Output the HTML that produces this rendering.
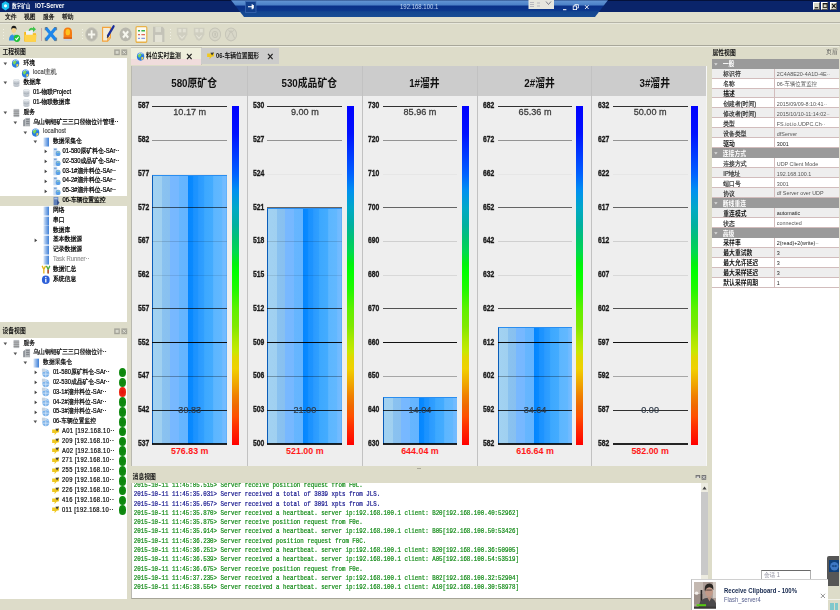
<!DOCTYPE html>
<html lang="zh"><head><meta charset="utf-8"><title>IOT-Server</title>
<style>
html,body{margin:0;padding:0;}
body{width:840px;height:610px;overflow:hidden;position:relative;background:#dddcc9;font-family:"Liberation Sans","WenQuanYi Zen Hei","Noto Sans CJK SC",sans-serif;}
div{position:absolute;box-sizing:border-box;}
.t{white-space:nowrap;transform:scaleY(1.15);}
.m{white-space:nowrap;transform:scaleY(1.15);font-family:"Liberation Mono","WenQuanYi Zen Hei Mono",monospace;}
svg{position:absolute;overflow:visible;}
.ti{transform:scale(1.08,1.2);}
</style></head><body>

<div style="left:0px;top:11.5px;width:840px;height:10.5px;background:#e0dfcd;"></div>
<div style="left:0px;top:0px;width:840px;height:11.5px;background:#0a246a;"></div>
<div style="left:0px;top:0px;width:840px;height:1px;background:#04113a;"></div>
<svg style="left:1px;top:1px" width="9" height="10" viewBox="0 0 9 10"><path d="M4.5 0.3 L8.2 2.4 L8.2 7 L4.5 9.4 L0.8 7 L0.8 2.4 Z" fill="#19c3f0"/><circle cx="4.5" cy="4.8" r="1.6" fill="#e8fbff"/></svg>
<div class="t" style="left:12px;top:4.01px;font-size:4.6px;line-height:5.98px;color:#fff;font-weight:bold;font-family:'Liberation Sans','Noto Sans CJK SC',sans-serif;">数字矿山</div>
<div class="t" style="left:35px;top:3.23px;font-size:5.8px;line-height:7.54px;color:#fff;font-weight:bold;font-family:'Liberation Sans','Noto Sans CJK SC',sans-serif;">IOT-Server</div>
<div style="left:813.3px;top:1.6px;width:7.2px;height:8px;background:#d8d7c6;border-top:0.6px solid #fff;border-left:0.6px solid #fff;border-right:0.8px solid #555;border-bottom:0.8px solid #555;"></div>
<div style="left:821.3px;top:1.6px;width:7.2px;height:8px;background:#d8d7c6;border-top:0.6px solid #fff;border-left:0.6px solid #fff;border-right:0.8px solid #555;border-bottom:0.8px solid #555;"></div>
<div style="left:830px;top:1.6px;width:7.2px;height:8px;background:#d8d7c6;border-top:0.6px solid #fff;border-left:0.6px solid #fff;border-right:0.8px solid #555;border-bottom:0.8px solid #555;"></div>
<svg style="left:813px;top:1px" width="26" height="10" viewBox="0 0 26 10"><rect x="1.8" y="6.2" width="3.4" height="1.1" fill="#111"/><rect x="10.2" y="2.4" width="3.8" height="4" fill="none" stroke="#111" stroke-width="0.8"/><rect x="10.2" y="2.2" width="3.8" height="1.2" fill="#111"/><path d="M19 2.8 L22.6 6.8 M22.6 2.8 L19 6.8" stroke="#111" stroke-width="1.1"/></svg>
<svg style="left:228px;top:0" width="384" height="18" viewBox="0 0 384 18">
<defs><linearGradient id="rdp" x1="0" y1="0" x2="0" y2="1">
<stop offset="0" stop-color="#2c4c84"/><stop offset="0.07" stop-color="#6092d2"/><stop offset="0.3" stop-color="#4a80c6"/><stop offset="0.35" stop-color="#0a3088"/><stop offset="0.62" stop-color="#0c388c"/><stop offset="0.7" stop-color="#144690"/><stop offset="1" stop-color="#184c94"/></linearGradient></defs>
<path d="M3 0 L380 0 L367 17 L16 17 Z" fill="url(#rdp)"/>
<rect x="17.5" y="1.6" width="10.5" height="10.8" fill="#123f8c" stroke="#3f6cb4" stroke-width="0.7"/>
<path d="M20 6.8 H24.2 M24.2 4.3 V9.3 M25.3 5 V8.6" stroke="#fff" stroke-width="1.1" fill="none"/>
<rect x="300.5" y="0" width="25.5" height="9" fill="#e6e6de"/>
<path d="M302 2.5 h4 M302 4.5 h4 M302 6.5 h4 M309 3 h3 M309 6 h3" stroke="#99a" stroke-width="0.6"/>
<path d="M318 1.5 l2.5 3 l2.5 -3" stroke="#667" stroke-width="0.8" fill="none"/>
<rect x="335" y="9.2" width="3.4" height="1" fill="#fff"/>
<rect x="345.2" y="6" width="3.4" height="3.6" fill="none" stroke="#fff" stroke-width="0.8"/>
<path d="M346.8 6 V4.6 H350.4 V8 H348.8" fill="none" stroke="#fff" stroke-width="0.8"/>
<path d="M357 5.2 L360.6 9 M360.6 5.2 L357 9" stroke="#fff" stroke-width="0.9"/>
</svg>
<div class="t" style="left:400px;top:4.4px;font-size:6.0px;line-height:7.8px;color:#bcd2f0;">192.168.100.1</div>
<div class="t" style="left:5px;top:14.23px;font-size:5.8px;line-height:7.54px;color:#111;-webkit-text-stroke:0.2px #111;">文件</div>
<div class="t" style="left:24px;top:14.23px;font-size:5.8px;line-height:7.54px;color:#111;-webkit-text-stroke:0.2px #111;">视图</div>
<div class="t" style="left:43px;top:14.23px;font-size:5.8px;line-height:7.54px;color:#111;-webkit-text-stroke:0.2px #111;">服务</div>
<div class="t" style="left:62px;top:14.23px;font-size:5.8px;line-height:7.54px;color:#111;-webkit-text-stroke:0.2px #111;">帮助</div>
<div style="left:0px;top:21.9px;width:840px;height:0.9px;background:#b6b5a8;"></div>
<div style="left:0px;top:22.8px;width:840px;height:0.8px;background:#e8e8dc;"></div>
<div style="left:0px;top:44.6px;width:840px;height:0.9px;background:#a8a79a;"></div>
<div style="left:0px;top:45.5px;width:840px;height:0.6px;background:#eeeee2;"></div>
<div style="left:3.2px;top:29px;width:1.2px;height:1.2px;background:#f0f0e4;"></div>
<div style="left:3.2px;top:32px;width:1.2px;height:1.2px;background:#f0f0e4;"></div>
<div style="left:3.2px;top:35px;width:1.2px;height:1.2px;background:#f0f0e4;"></div>
<div style="left:3.2px;top:38px;width:1.2px;height:1.2px;background:#f0f0e4;"></div>
<div style="left:81.5px;top:29px;width:1.2px;height:1.2px;background:#f0f0e4;"></div>
<div style="left:81.5px;top:32px;width:1.2px;height:1.2px;background:#f0f0e4;"></div>
<div style="left:81.5px;top:35px;width:1.2px;height:1.2px;background:#f0f0e4;"></div>
<div style="left:81.5px;top:38px;width:1.2px;height:1.2px;background:#f0f0e4;"></div>
<div style="left:170px;top:29px;width:1.2px;height:1.2px;background:#f0f0e4;"></div>
<div style="left:170px;top:32px;width:1.2px;height:1.2px;background:#f0f0e4;"></div>
<div style="left:170px;top:35px;width:1.2px;height:1.2px;background:#f0f0e4;"></div>
<div style="left:170px;top:38px;width:1.2px;height:1.2px;background:#f0f0e4;"></div>
<svg style="left:8px;top:25px" width="14" height="18.4" preserveAspectRatio="none" viewBox="0 0 14 16">
<circle cx="5.8" cy="4.6" r="2.3" fill="#f3d28c"/><path d="M3.2 4.4 Q3 0.6 5.8 0.6 Q8.8 0.6 8.5 4.4 L7.8 3 Q5.8 2.2 3.9 3 Z" fill="#1a1a1a"/>
<path d="M1 13.4 Q1 8 5.6 8 Q9.6 8 10 13.4 Z" fill="#2f8fe6"/>
<path d="M5.8 7.2 L4.6 9 L7 9 Z" fill="#f3e2a0"/>
<circle cx="9" cy="11.6" r="3.2" fill="#22c23a"/><path d="M7.4 11.6 L8.6 12.8 L10.6 10.4" stroke="#fff" stroke-width="1" fill="none"/></svg>
<svg style="left:23px;top:25px" width="15" height="18.4" preserveAspectRatio="none" viewBox="0 0 15 16">
<path d="M1.2 6 L5 6 L6 7.2 L13 7.2 L13 14.4 L1.2 14.4 Z" fill="#f7b818"/>
<path d="M3 5 L9.8 5 L9.8 9 L3 9 Z" fill="#eef3f8"/>
<path d="M1.4 8.4 L13.6 8.4 L12.8 14.6 L2 14.6 Z" fill="#ffd34a"/>
<path d="M5.5 4.6 Q7.5 1.6 10 2.8 L10 1.2 L13 3.6 L10 6 L10 4.4 Q8 3.8 6.6 5.2 Z" fill="#3fc34a"/></svg>
<div style="left:40.8px;top:28px;width:0.8px;height:12.5px;background:#c9a9a9;"></div>
<svg style="left:44px;top:25px" width="14" height="18.4" preserveAspectRatio="none" viewBox="0 0 14 16">
<path d="M2.6 3.4 L11 12.2 M11 3.4 L2.6 12.2" stroke="#1d86ea" stroke-width="3" stroke-linecap="round"/>
<path d="M1.2 4.6 V2.2 H3.4 M10.4 2.2 H12.6 V4.6 M12.6 11 V13.6 H10.4 M3.4 13.6 H1.2 V11" stroke="#5a6a78" stroke-width="0.7" fill="none"/></svg>
<svg style="left:62px;top:25px" width="12" height="18.4" preserveAspectRatio="none" viewBox="0 0 12 16">
<ellipse cx="5.8" cy="12.6" rx="4.6" ry="1.4" fill="#cfd6dc"/>
<path d="M1.6 11.8 V6.6 Q1.6 2.2 5.8 2.2 Q10 2.2 10 6.6 V11.8 Z" fill="#f47b12"/>
<ellipse cx="5.8" cy="6.2" rx="2.2" ry="2.8" fill="#ffc21e"/>
<rect x="1.6" y="10.8" width="8.4" height="1.2" fill="#d35a10"/></svg>
<svg style="left:85px;top:25px" width="14" height="18.4" preserveAspectRatio="none" viewBox="0 0 14 16">
<circle cx="6.6" cy="8.2" r="6" fill="#b8b7ad"/><circle cx="6.6" cy="8.2" r="6" fill="none" stroke="#c9c8bd" stroke-width="0.8"/>
<path d="M6.6 4.6 V11.8 M3 8.2 H10.2" stroke="#f6f6ee" stroke-width="1.8"/></svg>
<svg style="left:101px;top:25px" width="15" height="18.4" preserveAspectRatio="none" viewBox="0 0 15 16">
<path d="M1.6 2 H9.4 V11 L6.6 14 H1.6 Z" fill="#f4ecd8" stroke="#f5a23a" stroke-width="1.1"/>
<path d="M9.4 11 H6.6 V14" fill="#f8c070" stroke="#f5a23a" stroke-width="0.7"/>
<path d="M12.6 1.2 L7 9.4" stroke="#1c2f9a" stroke-width="2.2" stroke-linecap="round"/>
<path d="M7 9.4 L6.2 11.2" stroke="#333" stroke-width="1"/></svg>
<svg style="left:118.5px;top:25px" width="14" height="18.4" preserveAspectRatio="none" viewBox="0 0 14 16">
<circle cx="6.6" cy="8.2" r="6" fill="#b8b7ad"/>
<path d="M4 5.4 L9.2 11 M9.2 5.4 L4 11" stroke="#f6f6ee" stroke-width="2"/></svg>
<svg style="left:135px;top:25px" width="14" height="18.4" preserveAspectRatio="none" viewBox="0 0 14 16">
<rect x="1" y="1.4" width="10.8" height="13.6" rx="1" fill="#fbfaf2" stroke="#e8b24a" stroke-width="1.2"/>
<path d="M3 5 H5 M6.4 5 H10" stroke="#35b34a" stroke-width="1.2"/>
<path d="M3 8.4 H5 M6.4 8.4 H10" stroke="#e06a5a" stroke-width="1"/>
<path d="M3 11.6 H5 M6.4 11.6 H10" stroke="#8a9adf" stroke-width="1"/></svg>
<svg style="left:151.5px;top:25px" width="14" height="18.4" preserveAspectRatio="none" viewBox="0 0 14 16">
<path d="M1 1.6 H10.6 L12.4 3.4 V14.8 H1 Z" fill="#c4c3b8"/>
<rect x="3.4" y="1.6" width="5.6" height="4.6" fill="#dcdccf"/>
<rect x="3" y="8.6" width="7.2" height="6.2" fill="#e4e3d6"/></svg>
<svg style="left:176px;top:25px" width="13" height="18.4" preserveAspectRatio="none" viewBox="0 0 13 16">
<path d="M0.8 2.4 H11.4 V8 L8.6 12.4 L6 14 L3.4 12.4 L0.8 8 Z" fill="#cfcec0"/>
<rect x="2.4" y="3.4" width="3" height="3" fill="#e2e1d4"/><rect x="6.8" y="3.4" width="3" height="3" fill="#e2e1d4"/>
<path d="M3.4 9 L6 11.4 L8.6 9" stroke="#e6e5d8" stroke-width="1" fill="none"/></svg>
<svg style="left:193px;top:25px" width="13" height="18.4" preserveAspectRatio="none" viewBox="0 0 13 16">
<path d="M0.8 2.4 H11.4 V8 L8.6 12.4 L6 14 L3.4 12.4 L0.8 8 Z" fill="#cfcec0"/>
<rect x="2.4" y="3.4" width="3" height="3" fill="#e2e1d4"/><rect x="6.8" y="3.4" width="3" height="3" fill="#e2e1d4"/>
<path d="M3.4 9 L6 11.4 L8.6 9" stroke="#e6e5d8" stroke-width="1" fill="none"/></svg>
<svg style="left:209px;top:25px" width="13" height="18.4" preserveAspectRatio="none" viewBox="0 0 13 16">
<circle cx="6" cy="8.2" r="5.6" fill="#d8d7c8" stroke="#c6c5b8" stroke-width="0.9"/><circle cx="6" cy="8.2" r="2.6" fill="none" stroke="#c6c5b8" stroke-width="0.9"/><rect x="5.4" y="6.8" width="1.6" height="2.6" fill="#c6c5b8"/></svg>
<svg style="left:225.4px;top:25px" width="13" height="18.4" preserveAspectRatio="none" viewBox="0 0 13 16">
<circle cx="6" cy="8.2" r="5.6" fill="#d8d7c8" stroke="#c6c5b8" stroke-width="0.9"/><path d="M2.4 11.6 L6 5 L9.6 11.6 M3.6 4.6 Q6 8 8.8 4.4" fill="none" stroke="#c6c5b8" stroke-width="0.9"/></svg>
<div class="t" style="left:2.5px;top:49.03px;font-size:5.8px;line-height:7.54px;color:#111;font-weight:bold;font-family:'Liberation Sans','Noto Sans CJK SC',sans-serif;">工程视图</div>
<svg style="left:113.7px;top:49.2px" width="14" height="7" viewBox="0 0 14 7"><rect x="0.2" y="0.4" width="5.6" height="5.8" fill="#a3a398"/><rect x="1.6" y="1.8" width="3" height="3" fill="#d8d8cc"/><rect x="7.4" y="0.4" width="5.8" height="5.8" fill="#a3a398"/><path d="M8.8 1.8 L11.8 4.8 M11.8 1.8 L8.8 4.8" stroke="#e4e4da" stroke-width="0.9"/></svg>
<div style="left:0px;top:58px;width:127.3px;height:263.7px;background:#fff;"></div>
<div style="left:0px;top:196.02px;width:127.3px;height:9.8px;background:#dddcc9;"></div>
<svg style="left:3.2px;top:61.699999999999996px" width="5" height="4" viewBox="0 0 5 4"><path d="M0.5 0.6 H4.1 L2.3 3.2 Z" fill="#555"/></svg>
<svg class="ti" style="left:12.4px;top:59.699999999999996px" width="7.2" height="7.2" viewBox="0 0 8 8"><circle cx="4" cy="4" r="3.8" fill="#2a7de0"/><path d="M1 3 Q2.6 0.6 4.6 1.2 Q5.4 2.6 4 3.6 Q3.4 5.2 2 4.6 Z" fill="#7ed957"/><path d="M4.8 4.6 Q6.6 4 7 5.2 Q6.2 7 4.8 7.2 Z" fill="#f2d64a"/><path d="M1.2 2 Q4 -0.4 6.6 1.6" stroke="#cfe6ff" stroke-width="0.7" fill="none"/></svg>
<div class="t" style="left:23.5px;top:59.53px;font-size:5.8px;line-height:7.54px;color:#000;-webkit-text-stroke:0.2px #000;">环境</div>
<svg class="ti" style="left:22.4px;top:69.53px" width="7.2" height="7.2" viewBox="0 0 8 8"><circle cx="4" cy="4" r="3.8" fill="#2a7de0"/><path d="M1 3 Q2.6 0.6 4.6 1.2 Q5.4 2.6 4 3.6 Q3.4 5.2 2 4.6 Z" fill="#7ed957"/><path d="M4.8 4.6 Q6.6 4 7 5.2 Q6.2 7 4.8 7.2 Z" fill="#f2d64a"/><path d="M1.2 2 Q4 -0.4 6.6 1.6" stroke="#cfe6ff" stroke-width="0.7" fill="none"/></svg>
<div class="t" style="left:33px;top:69.36px;font-size:5.8px;line-height:7.54px;color:#555;-webkit-text-stroke:0.2px #555;">local主机</div>
<svg style="left:3.2px;top:81.36px" width="5" height="4" viewBox="0 0 5 4"><path d="M0.5 0.6 H4.1 L2.3 3.2 Z" fill="#555"/></svg>
<svg class="ti" style="left:12.8px;top:79.16px" width="7" height="8" viewBox="0 0 7 8"><path d="M0.6 1.6 Q3.4 -0.4 6.2 1.6 V6.4 Q3.4 8.4 0.6 6.4 Z" fill="#c2c8cf"/><ellipse cx="3.4" cy="1.7" rx="2.8" ry="1.1" fill="#e6eaee"/><path d="M0.6 4 Q3.4 5.6 6.2 4" stroke="#9aa3ad" stroke-width="0.5" fill="none"/></svg>
<div class="t" style="left:23.5px;top:79.19px;font-size:5.8px;line-height:7.54px;color:#000;-webkit-text-stroke:0.2px #000;">数据库</div>
<svg class="ti" style="left:22.8px;top:88.99px" width="7" height="8" viewBox="0 0 7 8"><path d="M0.6 1.6 Q3.4 -0.4 6.2 1.6 V6.4 Q3.4 8.4 0.6 6.4 Z" fill="#c2c8cf"/><ellipse cx="3.4" cy="1.7" rx="2.8" ry="1.1" fill="#e6eaee"/><path d="M0.6 4 Q3.4 5.6 6.2 4" stroke="#9aa3ad" stroke-width="0.5" fill="none"/></svg>
<div class="t" style="left:33px;top:89.02px;font-size:5.8px;line-height:7.54px;color:#000;-webkit-text-stroke:0.2px #000;">01-物联Project</div>
<svg class="ti" style="left:22.8px;top:98.82000000000001px" width="7" height="8" viewBox="0 0 7 8"><path d="M0.6 1.6 Q3.4 -0.4 6.2 1.6 V6.4 Q3.4 8.4 0.6 6.4 Z" fill="#c2c8cf"/><ellipse cx="3.4" cy="1.7" rx="2.8" ry="1.1" fill="#e6eaee"/><path d="M0.6 4 Q3.4 5.6 6.2 4" stroke="#9aa3ad" stroke-width="0.5" fill="none"/></svg>
<div class="t" style="left:33px;top:98.85px;font-size:5.8px;line-height:7.54px;color:#000;-webkit-text-stroke:0.2px #000;">01-物联数据库</div>
<svg style="left:3.2px;top:110.85px" width="5" height="4" viewBox="0 0 5 4"><path d="M0.5 0.6 H4.1 L2.3 3.2 Z" fill="#555"/></svg>
<svg class="ti" style="left:12.8px;top:108.64999999999999px" width="7" height="8" viewBox="0 0 7 8"><rect x="0.8" y="0.6" width="5.2" height="6.8" fill="#b9bcc0"/><path d="M0.8 2.4 H6 M0.8 4.2 H6 M0.8 6 H6" stroke="#777" stroke-width="0.6"/></svg>
<div class="t" style="left:23.5px;top:108.68px;font-size:5.8px;line-height:7.54px;color:#000;-webkit-text-stroke:0.2px #000;">服务</div>
<svg style="left:13.2px;top:120.68px" width="5" height="4" viewBox="0 0 5 4"><path d="M0.5 0.6 H4.1 L2.3 3.2 Z" fill="#555"/></svg>
<svg class="ti" style="left:22.6px;top:118.48px" width="7.4" height="8" viewBox="0 0 7.4 8"><path d="M0.4 7.6 V2.6 L2.6 1 V7.6 Z" fill="#8f949a"/><rect x="2.6" y="0.6" width="4.2" height="7" fill="#aeb2b6"/><path d="M3.2 2 H6.2 M3.2 3.6 H6.2 M3.2 5.2 H6.2" stroke="#6d7278" stroke-width="0.6"/></svg>
<div class="t" style="left:33.3px;top:118.51px;font-size:5.8px;line-height:7.54px;color:#000;-webkit-text-stroke:0.2px #000;">乌山铜钼矿三三口径物位计管理··</div>
<svg style="left:23.2px;top:130.51000000000002px" width="5" height="4" viewBox="0 0 5 4"><path d="M0.5 0.6 H4.1 L2.3 3.2 Z" fill="#555"/></svg>
<svg class="ti" style="left:32.4px;top:128.51000000000002px" width="7.2" height="7.2" viewBox="0 0 8 8"><circle cx="4" cy="4" r="3.8" fill="#2a7de0"/><path d="M1 3 Q2.6 0.6 4.6 1.2 Q5.4 2.6 4 3.6 Q3.4 5.2 2 4.6 Z" fill="#7ed957"/><path d="M4.8 4.6 Q6.6 4 7 5.2 Q6.2 7 4.8 7.2 Z" fill="#f2d64a"/><path d="M1.2 2 Q4 -0.4 6.6 1.6" stroke="#cfe6ff" stroke-width="0.7" fill="none"/></svg>
<div class="t" style="left:43.1px;top:128.34px;font-size:5.8px;line-height:7.54px;color:#555;-webkit-text-stroke:0.2px #555;">localhost</div>
<svg style="left:33.2px;top:140.34px" width="5" height="4" viewBox="0 0 5 4"><path d="M0.5 0.6 H4.1 L2.3 3.2 Z" fill="#555"/></svg>
<svg class="ti" style="left:43px;top:137.94px" width="6.4" height="8.2" viewBox="0 0 6.4 8.2"><defs><linearGradient id="bk460_1419" x1="0" x2="1"><stop offset="0" stop-color="#dfeaf8"/><stop offset="0.45" stop-color="#8fb6ea"/><stop offset="1" stop-color="#3f7fd6"/></linearGradient></defs><rect x="0.6" y="0.4" width="5.2" height="7.4" fill="url(#bk460_1419)"/></svg>
<div class="t" style="left:52.900000000000006px;top:138.17px;font-size:5.8px;line-height:7.54px;color:#000;-webkit-text-stroke:0.2px #000;">数据采集仓</div>
<svg style="left:43.800000000000004px;top:149.46999999999997px" width="4" height="5" viewBox="0 0 4 5"><path d="M0.6 0.5 V4.3 L3.2 2.4 Z" fill="#444"/></svg>
<svg class="ti" style="left:52.6px;top:147.76999999999998px" width="7.4" height="8.2" viewBox="0 0 7.4 8.2"><rect x="0.6" y="0.6" width="3.6" height="7" fill="#c9dcf2"/><rect x="1.2" y="1.2" width="2.4" height="1.2" fill="#7fa6d8"/><circle cx="5" cy="5.2" r="2.2" fill="#5aa0e8"/><path d="M3.8 4.6 Q5 3.2 6.4 4.4" stroke="#bfe0a0" stroke-width="0.7" fill="none"/></svg>
<div class="t" style="left:62.5px;top:148.0px;font-size:5.8px;line-height:7.54px;color:#000;-webkit-text-stroke:0.2px #000;">01-580原矿料仓-SAr··</div>
<svg style="left:43.800000000000004px;top:159.29999999999998px" width="4" height="5" viewBox="0 0 4 5"><path d="M0.6 0.5 V4.3 L3.2 2.4 Z" fill="#444"/></svg>
<svg class="ti" style="left:52.6px;top:157.6px" width="7.4" height="8.2" viewBox="0 0 7.4 8.2"><rect x="0.6" y="0.6" width="3.6" height="7" fill="#c9dcf2"/><rect x="1.2" y="1.2" width="2.4" height="1.2" fill="#7fa6d8"/><circle cx="5" cy="5.2" r="2.2" fill="#5aa0e8"/><path d="M3.8 4.6 Q5 3.2 6.4 4.4" stroke="#bfe0a0" stroke-width="0.7" fill="none"/></svg>
<div class="t" style="left:62.5px;top:157.83px;font-size:5.8px;line-height:7.54px;color:#000;-webkit-text-stroke:0.2px #000;">02-530成品矿仓-SAr··</div>
<svg style="left:43.800000000000004px;top:169.13px" width="4" height="5" viewBox="0 0 4 5"><path d="M0.6 0.5 V4.3 L3.2 2.4 Z" fill="#444"/></svg>
<svg class="ti" style="left:52.6px;top:167.43px" width="7.4" height="8.2" viewBox="0 0 7.4 8.2"><rect x="0.6" y="0.6" width="3.6" height="7" fill="#c9dcf2"/><rect x="1.2" y="1.2" width="2.4" height="1.2" fill="#7fa6d8"/><circle cx="5" cy="5.2" r="2.2" fill="#5aa0e8"/><path d="M3.8 4.6 Q5 3.2 6.4 4.4" stroke="#bfe0a0" stroke-width="0.7" fill="none"/></svg>
<div class="t" style="left:62.5px;top:167.66px;font-size:5.8px;line-height:7.54px;color:#000;-webkit-text-stroke:0.2px #000;">03-1#溜井料位-SAr··</div>
<svg style="left:43.800000000000004px;top:178.95999999999998px" width="4" height="5" viewBox="0 0 4 5"><path d="M0.6 0.5 V4.3 L3.2 2.4 Z" fill="#444"/></svg>
<svg class="ti" style="left:52.6px;top:177.26px" width="7.4" height="8.2" viewBox="0 0 7.4 8.2"><rect x="0.6" y="0.6" width="3.6" height="7" fill="#c9dcf2"/><rect x="1.2" y="1.2" width="2.4" height="1.2" fill="#7fa6d8"/><circle cx="5" cy="5.2" r="2.2" fill="#5aa0e8"/><path d="M3.8 4.6 Q5 3.2 6.4 4.4" stroke="#bfe0a0" stroke-width="0.7" fill="none"/></svg>
<div class="t" style="left:62.5px;top:177.49px;font-size:5.8px;line-height:7.54px;color:#000;-webkit-text-stroke:0.2px #000;">04-2#溜井料位-SAr··</div>
<svg style="left:43.800000000000004px;top:188.79px" width="4" height="5" viewBox="0 0 4 5"><path d="M0.6 0.5 V4.3 L3.2 2.4 Z" fill="#444"/></svg>
<svg class="ti" style="left:52.6px;top:187.09px" width="7.4" height="8.2" viewBox="0 0 7.4 8.2"><rect x="0.6" y="0.6" width="3.6" height="7" fill="#c9dcf2"/><rect x="1.2" y="1.2" width="2.4" height="1.2" fill="#7fa6d8"/><circle cx="5" cy="5.2" r="2.2" fill="#5aa0e8"/><path d="M3.8 4.6 Q5 3.2 6.4 4.4" stroke="#bfe0a0" stroke-width="0.7" fill="none"/></svg>
<div class="t" style="left:62.5px;top:187.32px;font-size:5.8px;line-height:7.54px;color:#000;-webkit-text-stroke:0.2px #000;">05-3#溜井料位-SAr··</div>
<svg class="ti" style="left:52.6px;top:196.92000000000002px" width="7.4" height="8.2" viewBox="0 0 7.4 8.2"><rect x="0.8" y="0.6" width="4.4" height="7" fill="#5f7fb8"/><rect x="1.4" y="1.2" width="3" height="1.4" fill="#a8c0e6"/><path d="M4 3 L6.4 5.4 L4 7.4 Z" fill="#34508c"/></svg>
<div class="t" style="left:62.5px;top:197.15px;font-size:5.8px;line-height:7.54px;color:#000;-webkit-text-stroke:0.2px #000;">06-车辆位置监控</div>
<svg class="ti" style="left:42.5px;top:206.75px" width="6.4" height="8.2" viewBox="0 0 6.4 8.2"><defs><linearGradient id="bk455_2107" x1="0" x2="1"><stop offset="0" stop-color="#dfeaf8"/><stop offset="0.45" stop-color="#8fb6ea"/><stop offset="1" stop-color="#3f7fd6"/></linearGradient></defs><rect x="0.6" y="0.4" width="5.2" height="7.4" fill="url(#bk455_2107)"/></svg>
<div class="t" style="left:53px;top:206.98px;font-size:5.8px;line-height:7.54px;color:#000;-webkit-text-stroke:0.2px #000;">网络</div>
<svg class="ti" style="left:42.5px;top:216.57999999999998px" width="6.4" height="8.2" viewBox="0 0 6.4 8.2"><defs><linearGradient id="bk455_2205" x1="0" x2="1"><stop offset="0" stop-color="#dfeaf8"/><stop offset="0.45" stop-color="#8fb6ea"/><stop offset="1" stop-color="#3f7fd6"/></linearGradient></defs><rect x="0.6" y="0.4" width="5.2" height="7.4" fill="url(#bk455_2205)"/></svg>
<div class="t" style="left:53px;top:216.81px;font-size:5.8px;line-height:7.54px;color:#000;-webkit-text-stroke:0.2px #000;">串口</div>
<svg class="ti" style="left:42.5px;top:226.41000000000003px" width="6.4" height="8.2" viewBox="0 0 6.4 8.2"><defs><linearGradient id="bk455_2304" x1="0" x2="1"><stop offset="0" stop-color="#dfeaf8"/><stop offset="0.45" stop-color="#8fb6ea"/><stop offset="1" stop-color="#3f7fd6"/></linearGradient></defs><rect x="0.6" y="0.4" width="5.2" height="7.4" fill="url(#bk455_2304)"/></svg>
<div class="t" style="left:53px;top:226.64px;font-size:5.8px;line-height:7.54px;color:#000;-webkit-text-stroke:0.2px #000;">数据库</div>
<svg style="left:33.800000000000004px;top:237.94px" width="4" height="5" viewBox="0 0 4 5"><path d="M0.6 0.5 V4.3 L3.2 2.4 Z" fill="#444"/></svg>
<svg class="ti" style="left:42.5px;top:236.24px" width="6.4" height="8.2" viewBox="0 0 6.4 8.2"><defs><linearGradient id="bk455_2402" x1="0" x2="1"><stop offset="0" stop-color="#dfeaf8"/><stop offset="0.45" stop-color="#8fb6ea"/><stop offset="1" stop-color="#3f7fd6"/></linearGradient></defs><rect x="0.6" y="0.4" width="5.2" height="7.4" fill="url(#bk455_2402)"/></svg>
<div class="t" style="left:53px;top:236.47px;font-size:5.8px;line-height:7.54px;color:#000;-webkit-text-stroke:0.2px #000;">基本数据源</div>
<svg class="ti" style="left:42.5px;top:246.07px" width="6.4" height="8.2" viewBox="0 0 6.4 8.2"><defs><linearGradient id="bk455_2500" x1="0" x2="1"><stop offset="0" stop-color="#dfeaf8"/><stop offset="0.45" stop-color="#8fb6ea"/><stop offset="1" stop-color="#3f7fd6"/></linearGradient></defs><rect x="0.6" y="0.4" width="5.2" height="7.4" fill="url(#bk455_2500)"/></svg>
<div class="t" style="left:53px;top:246.3px;font-size:5.8px;line-height:7.54px;color:#000;-webkit-text-stroke:0.2px #000;">记录数据源</div>
<svg class="ti" style="left:42.5px;top:255.89999999999998px" width="6.4" height="8.2" viewBox="0 0 6.4 8.2"><defs><linearGradient id="bk455_2599" x1="0" x2="1"><stop offset="0" stop-color="#dfeaf8"/><stop offset="0.45" stop-color="#8fb6ea"/><stop offset="1" stop-color="#3f7fd6"/></linearGradient></defs><rect x="0.6" y="0.4" width="5.2" height="7.4" fill="url(#bk455_2599)"/></svg>
<div class="t" style="left:53px;top:256.13px;font-size:5.8px;line-height:7.54px;color:#999;-webkit-text-stroke:0.2px #999;">Task Runner··</div>
<svg class="ti" style="left:41.7px;top:266.13px" width="8" height="7.4" viewBox="0 0 8 7.4"><path d="M0.4 0.6 L2 3.4 V6.8 M3.6 0.6 L2 3.4" stroke="#e2b416" stroke-width="1.2" fill="none"/><path d="M4.4 0.6 L6 3.4 V6.8 M7.6 0.6 L6 3.4" stroke="#4aa63c" stroke-width="1.2" fill="none"/><rect x="5.4" y="3.6" width="1.2" height="3.2" fill="#d23c2c"/></svg>
<div class="t" style="left:53px;top:265.96px;font-size:5.8px;line-height:7.54px;color:#000;-webkit-text-stroke:0.2px #000;">数据汇总</div>
<svg class="ti" style="left:41.9px;top:275.76px" width="7.6" height="7.6" viewBox="0 0 7.6 7.6"><circle cx="3.8" cy="3.8" r="3.6" fill="#2c5fd8"/><rect x="3.2" y="3" width="1.2" height="3" fill="#fff"/><rect x="3.2" y="1.4" width="1.2" height="1.1" fill="#fff"/></svg>
<div class="t" style="left:53px;top:275.79px;font-size:5.8px;line-height:7.54px;color:#000;-webkit-text-stroke:0.2px #000;">系统信息</div>
<div class="t" style="left:2.5px;top:327.53px;font-size:5.8px;line-height:7.54px;color:#111;font-weight:bold;font-family:'Liberation Sans','Noto Sans CJK SC',sans-serif;">设备视图</div>
<svg style="left:113.7px;top:328.2px" width="14" height="7" viewBox="0 0 14 7"><rect x="0.2" y="0.4" width="5.6" height="5.8" fill="#a3a398"/><rect x="1.6" y="1.8" width="3" height="3" fill="#d8d8cc"/><rect x="7.4" y="0.4" width="5.8" height="5.8" fill="#a3a398"/><path d="M8.8 1.8 L11.8 4.8 M11.8 1.8 L8.8 4.8" stroke="#e4e4da" stroke-width="0.9"/></svg>
<div style="left:0px;top:337.7px;width:127.3px;height:261.3px;background:#fff;"></div>
<svg style="left:3.2px;top:341.7px" width="5" height="4" viewBox="0 0 5 4"><path d="M0.5 0.6 H4.1 L2.3 3.2 Z" fill="#555"/></svg>
<svg class="ti" style="left:12.8px;top:339.5px" width="7" height="8" viewBox="0 0 7 8"><rect x="0.8" y="0.6" width="5.2" height="6.8" fill="#b9bcc0"/><path d="M0.8 2.4 H6 M0.8 4.2 H6 M0.8 6 H6" stroke="#777" stroke-width="0.6"/></svg>
<div class="t" style="left:23.5px;top:339.53px;font-size:5.8px;line-height:7.54px;color:#000;-webkit-text-stroke:0.2px #111;">服务</div>
<svg style="left:13.2px;top:351.53px" width="5" height="4" viewBox="0 0 5 4"><path d="M0.5 0.6 H4.1 L2.3 3.2 Z" fill="#555"/></svg>
<svg class="ti" style="left:22.6px;top:349.33px" width="7.4" height="8" viewBox="0 0 7.4 8"><path d="M0.4 7.6 V2.6 L2.6 1 V7.6 Z" fill="#8f949a"/><rect x="2.6" y="0.6" width="4.2" height="7" fill="#aeb2b6"/><path d="M3.2 2 H6.2 M3.2 3.6 H6.2 M3.2 5.2 H6.2" stroke="#6d7278" stroke-width="0.6"/></svg>
<div class="t" style="left:33.3px;top:349.36px;font-size:5.8px;line-height:7.54px;color:#000;-webkit-text-stroke:0.2px #111;">乌山铜钼矿三三口径物位计··</div>
<svg style="left:23.2px;top:361.36px" width="5" height="4" viewBox="0 0 5 4"><path d="M0.5 0.6 H4.1 L2.3 3.2 Z" fill="#555"/></svg>
<svg class="ti" style="left:33px;top:358.96000000000004px" width="6.4" height="8.2" viewBox="0 0 6.4 8.2"><defs><linearGradient id="bk360_3629" x1="0" x2="1"><stop offset="0" stop-color="#dfeaf8"/><stop offset="0.45" stop-color="#8fb6ea"/><stop offset="1" stop-color="#3f7fd6"/></linearGradient></defs><rect x="0.6" y="0.4" width="5.2" height="7.4" fill="url(#bk360_3629)"/></svg>
<div class="t" style="left:43.1px;top:359.19px;font-size:5.8px;line-height:7.54px;color:#000;-webkit-text-stroke:0.2px #111;">数据采集仓</div>
<svg style="left:33.800000000000004px;top:370.49px" width="4" height="5" viewBox="0 0 4 5"><path d="M0.6 0.5 V4.3 L3.2 2.4 Z" fill="#444"/></svg>
<svg class="ti" style="left:42.4px;top:368.79px" width="7.6" height="8.2" viewBox="0 0 7.6 8.2"><circle cx="3.8" cy="4.4" r="3.2" fill="#7db3ea"/><path d="M1.2 3 Q3.8 0.6 6.4 3 M0.8 5 H6.8 M3.8 1.2 V7.6" stroke="#e2effb" stroke-width="0.6" fill="none"/><rect x="0.2" y="0.4" width="3" height="2.6" fill="#c8d3de"/></svg>
<div class="t" style="left:52.900000000000006px;top:369.02px;font-size:5.8px;line-height:7.54px;color:#000;-webkit-text-stroke:0.2px #111;">01-580原矿料仓-SAr··</div>
<div style="left:119.2px;top:367.79px;width:7.3px;height:9.6px;background:radial-gradient(ellipse at 50% 50%,#0a840a 0%,#128c12 70%,#4cae4c 100%);border-radius:3.65px / 4.8px;"></div>
<svg style="left:33.800000000000004px;top:380.32px" width="4" height="5" viewBox="0 0 4 5"><path d="M0.6 0.5 V4.3 L3.2 2.4 Z" fill="#444"/></svg>
<svg class="ti" style="left:42.4px;top:378.62px" width="7.6" height="8.2" viewBox="0 0 7.6 8.2"><circle cx="3.8" cy="4.4" r="3.2" fill="#7db3ea"/><path d="M1.2 3 Q3.8 0.6 6.4 3 M0.8 5 H6.8 M3.8 1.2 V7.6" stroke="#e2effb" stroke-width="0.6" fill="none"/><rect x="0.2" y="0.4" width="3" height="2.6" fill="#c8d3de"/></svg>
<div class="t" style="left:52.900000000000006px;top:378.85px;font-size:5.8px;line-height:7.54px;color:#000;-webkit-text-stroke:0.2px #111;">02-530成品矿仓-SAr··</div>
<div style="left:119.2px;top:377.62px;width:7.3px;height:9.6px;background:radial-gradient(ellipse at 50% 50%,#0a840a 0%,#128c12 70%,#4cae4c 100%);border-radius:3.65px / 4.8px;"></div>
<svg style="left:33.800000000000004px;top:390.15px" width="4" height="5" viewBox="0 0 4 5"><path d="M0.6 0.5 V4.3 L3.2 2.4 Z" fill="#444"/></svg>
<svg class="ti" style="left:42.4px;top:388.45px" width="7.6" height="8.2" viewBox="0 0 7.6 8.2"><circle cx="3.8" cy="4.4" r="3.2" fill="#7db3ea"/><path d="M1.2 3 Q3.8 0.6 6.4 3 M0.8 5 H6.8 M3.8 1.2 V7.6" stroke="#e2effb" stroke-width="0.6" fill="none"/><rect x="0.2" y="0.4" width="3" height="2.6" fill="#c8d3de"/></svg>
<div class="t" style="left:52.900000000000006px;top:388.68px;font-size:5.8px;line-height:7.54px;color:#000;-webkit-text-stroke:0.2px #111;">03-1#溜井料位-SAr··</div>
<div style="left:119.2px;top:387.45px;width:7.3px;height:9.6px;background:radial-gradient(ellipse at 50% 50%,#e60c0c 0%,#ec2a14 70%,#f0685a 100%);border-radius:3.65px / 4.8px;"></div>
<svg style="left:33.800000000000004px;top:399.98px" width="4" height="5" viewBox="0 0 4 5"><path d="M0.6 0.5 V4.3 L3.2 2.4 Z" fill="#444"/></svg>
<svg class="ti" style="left:42.4px;top:398.28000000000003px" width="7.6" height="8.2" viewBox="0 0 7.6 8.2"><circle cx="3.8" cy="4.4" r="3.2" fill="#7db3ea"/><path d="M1.2 3 Q3.8 0.6 6.4 3 M0.8 5 H6.8 M3.8 1.2 V7.6" stroke="#e2effb" stroke-width="0.6" fill="none"/><rect x="0.2" y="0.4" width="3" height="2.6" fill="#c8d3de"/></svg>
<div class="t" style="left:52.900000000000006px;top:398.51px;font-size:5.8px;line-height:7.54px;color:#000;-webkit-text-stroke:0.2px #111;">04-2#溜井料位-SAr··</div>
<div style="left:119.2px;top:397.28000000000003px;width:7.3px;height:9.6px;background:radial-gradient(ellipse at 50% 50%,#0a840a 0%,#128c12 70%,#4cae4c 100%);border-radius:3.65px / 4.8px;"></div>
<svg style="left:33.800000000000004px;top:409.81px" width="4" height="5" viewBox="0 0 4 5"><path d="M0.6 0.5 V4.3 L3.2 2.4 Z" fill="#444"/></svg>
<svg class="ti" style="left:42.4px;top:408.11px" width="7.6" height="8.2" viewBox="0 0 7.6 8.2"><circle cx="3.8" cy="4.4" r="3.2" fill="#7db3ea"/><path d="M1.2 3 Q3.8 0.6 6.4 3 M0.8 5 H6.8 M3.8 1.2 V7.6" stroke="#e2effb" stroke-width="0.6" fill="none"/><rect x="0.2" y="0.4" width="3" height="2.6" fill="#c8d3de"/></svg>
<div class="t" style="left:52.900000000000006px;top:408.34px;font-size:5.8px;line-height:7.54px;color:#000;-webkit-text-stroke:0.2px #111;">05-3#溜井料位-SAr··</div>
<div style="left:119.2px;top:407.11px;width:7.3px;height:9.6px;background:radial-gradient(ellipse at 50% 50%,#0a840a 0%,#128c12 70%,#4cae4c 100%);border-radius:3.65px / 4.8px;"></div>
<svg style="left:33.2px;top:420.34px" width="5" height="4" viewBox="0 0 5 4"><path d="M0.5 0.6 H4.1 L2.3 3.2 Z" fill="#555"/></svg>
<svg class="ti" style="left:42.4px;top:417.94px" width="7.6" height="8.2" viewBox="0 0 7.6 8.2"><circle cx="3.8" cy="4.4" r="3.2" fill="#7db3ea"/><path d="M1.2 3 Q3.8 0.6 6.4 3 M0.8 5 H6.8 M3.8 1.2 V7.6" stroke="#e2effb" stroke-width="0.6" fill="none"/><rect x="0.2" y="0.4" width="3" height="2.6" fill="#c8d3de"/></svg>
<div class="t" style="left:52.900000000000006px;top:418.17px;font-size:5.8px;line-height:7.54px;color:#000;-webkit-text-stroke:0.2px #111;">06-车辆位置监控</div>
<div style="left:119.2px;top:416.94px;width:7.3px;height:9.6px;background:radial-gradient(ellipse at 50% 50%,#0a840a 0%,#128c12 70%,#4cae4c 100%);border-radius:3.65px / 4.8px;"></div>
<svg class="ti" style="left:52.1px;top:428.77px" width="7.4" height="6.4" viewBox="0 0 7.4 6.4"><path d="M0.4 1 H5 L6.8 0.2 V3.2 L4.6 3.6 L2.6 5.8 L2.8 3.8 H0.4 Z" fill="#f0c820"/><path d="M3.4 0.4 L6.8 0.2 L5 2.6 Z" fill="#3a3a3a"/></svg>
<div class="t" style="left:62px;top:428.0px;font-size:5.8px;line-height:7.54px;color:#111;-webkit-text-stroke:0.2px #111;letter-spacing:0.38px;">A01 [192.168.10··</div>
<div style="left:119.2px;top:426.77px;width:7.3px;height:9.6px;background:radial-gradient(ellipse at 50% 50%,#0a840a 0%,#128c12 70%,#4cae4c 100%);border-radius:3.65px / 4.8px;"></div>
<svg class="ti" style="left:52.1px;top:438.6px" width="7.4" height="6.4" viewBox="0 0 7.4 6.4"><path d="M0.4 1 H5 L6.8 0.2 V3.2 L4.6 3.6 L2.6 5.8 L2.8 3.8 H0.4 Z" fill="#f0c820"/><path d="M3.4 0.4 L6.8 0.2 L5 2.6 Z" fill="#3a3a3a"/></svg>
<div class="t" style="left:62px;top:437.83px;font-size:5.8px;line-height:7.54px;color:#111;-webkit-text-stroke:0.2px #111;letter-spacing:0.38px;">209 [192.168.10··</div>
<div style="left:119.2px;top:436.6px;width:7.3px;height:9.6px;background:radial-gradient(ellipse at 50% 50%,#0a840a 0%,#128c12 70%,#4cae4c 100%);border-radius:3.65px / 4.8px;"></div>
<svg class="ti" style="left:52.1px;top:448.43px" width="7.4" height="6.4" viewBox="0 0 7.4 6.4"><path d="M0.4 1 H5 L6.8 0.2 V3.2 L4.6 3.6 L2.6 5.8 L2.8 3.8 H0.4 Z" fill="#f0c820"/><path d="M3.4 0.4 L6.8 0.2 L5 2.6 Z" fill="#3a3a3a"/></svg>
<div class="t" style="left:62px;top:447.66px;font-size:5.8px;line-height:7.54px;color:#111;-webkit-text-stroke:0.2px #111;letter-spacing:0.38px;">A02 [192.168.10··</div>
<div style="left:119.2px;top:446.43px;width:7.3px;height:9.6px;background:radial-gradient(ellipse at 50% 50%,#0a840a 0%,#128c12 70%,#4cae4c 100%);border-radius:3.65px / 4.8px;"></div>
<svg class="ti" style="left:52.1px;top:458.26px" width="7.4" height="6.4" viewBox="0 0 7.4 6.4"><path d="M0.4 1 H5 L6.8 0.2 V3.2 L4.6 3.6 L2.6 5.8 L2.8 3.8 H0.4 Z" fill="#f0c820"/><path d="M3.4 0.4 L6.8 0.2 L5 2.6 Z" fill="#3a3a3a"/></svg>
<div class="t" style="left:62px;top:457.49px;font-size:5.8px;line-height:7.54px;color:#111;-webkit-text-stroke:0.2px #111;letter-spacing:0.38px;">271 [192.168.10··</div>
<div style="left:119.2px;top:456.26px;width:7.3px;height:9.6px;background:radial-gradient(ellipse at 50% 50%,#0a840a 0%,#128c12 70%,#4cae4c 100%);border-radius:3.65px / 4.8px;"></div>
<svg class="ti" style="left:52.1px;top:468.09000000000003px" width="7.4" height="6.4" viewBox="0 0 7.4 6.4"><path d="M0.4 1 H5 L6.8 0.2 V3.2 L4.6 3.6 L2.6 5.8 L2.8 3.8 H0.4 Z" fill="#f0c820"/><path d="M3.4 0.4 L6.8 0.2 L5 2.6 Z" fill="#3a3a3a"/></svg>
<div class="t" style="left:62px;top:467.32px;font-size:5.8px;line-height:7.54px;color:#111;-webkit-text-stroke:0.2px #111;letter-spacing:0.38px;">255 [192.168.10··</div>
<div style="left:119.2px;top:466.09000000000003px;width:7.3px;height:9.6px;background:radial-gradient(ellipse at 50% 50%,#0a840a 0%,#128c12 70%,#4cae4c 100%);border-radius:3.65px / 4.8px;"></div>
<svg class="ti" style="left:52.1px;top:477.92px" width="7.4" height="6.4" viewBox="0 0 7.4 6.4"><path d="M0.4 1 H5 L6.8 0.2 V3.2 L4.6 3.6 L2.6 5.8 L2.8 3.8 H0.4 Z" fill="#f0c820"/><path d="M3.4 0.4 L6.8 0.2 L5 2.6 Z" fill="#3a3a3a"/></svg>
<div class="t" style="left:62px;top:477.15px;font-size:5.8px;line-height:7.54px;color:#111;-webkit-text-stroke:0.2px #111;letter-spacing:0.38px;">209 [192.168.10··</div>
<div style="left:119.2px;top:475.92px;width:7.3px;height:9.6px;background:radial-gradient(ellipse at 50% 50%,#0a840a 0%,#128c12 70%,#4cae4c 100%);border-radius:3.65px / 4.8px;"></div>
<svg class="ti" style="left:52.1px;top:487.75px" width="7.4" height="6.4" viewBox="0 0 7.4 6.4"><path d="M0.4 1 H5 L6.8 0.2 V3.2 L4.6 3.6 L2.6 5.8 L2.8 3.8 H0.4 Z" fill="#f0c820"/><path d="M3.4 0.4 L6.8 0.2 L5 2.6 Z" fill="#3a3a3a"/></svg>
<div class="t" style="left:62px;top:486.98px;font-size:5.8px;line-height:7.54px;color:#111;-webkit-text-stroke:0.2px #111;letter-spacing:0.38px;">226 [192.168.10··</div>
<div style="left:119.2px;top:485.75px;width:7.3px;height:9.6px;background:radial-gradient(ellipse at 50% 50%,#0a840a 0%,#128c12 70%,#4cae4c 100%);border-radius:3.65px / 4.8px;"></div>
<svg class="ti" style="left:52.1px;top:497.58000000000004px" width="7.4" height="6.4" viewBox="0 0 7.4 6.4"><path d="M0.4 1 H5 L6.8 0.2 V3.2 L4.6 3.6 L2.6 5.8 L2.8 3.8 H0.4 Z" fill="#f0c820"/><path d="M3.4 0.4 L6.8 0.2 L5 2.6 Z" fill="#3a3a3a"/></svg>
<div class="t" style="left:62px;top:496.81px;font-size:5.8px;line-height:7.54px;color:#111;-webkit-text-stroke:0.2px #111;letter-spacing:0.38px;">416 [192.168.10··</div>
<div style="left:119.2px;top:495.58000000000004px;width:7.3px;height:9.6px;background:radial-gradient(ellipse at 50% 50%,#0a840a 0%,#128c12 70%,#4cae4c 100%);border-radius:3.65px / 4.8px;"></div>
<svg class="ti" style="left:52.1px;top:507.41px" width="7.4" height="6.4" viewBox="0 0 7.4 6.4"><path d="M0.4 1 H5 L6.8 0.2 V3.2 L4.6 3.6 L2.6 5.8 L2.8 3.8 H0.4 Z" fill="#f0c820"/><path d="M3.4 0.4 L6.8 0.2 L5 2.6 Z" fill="#3a3a3a"/></svg>
<div class="t" style="left:62px;top:506.64px;font-size:5.8px;line-height:7.54px;color:#111;-webkit-text-stroke:0.2px #111;letter-spacing:0.38px;">011 [192.168.10··</div>
<div style="left:119.2px;top:505.41px;width:7.3px;height:9.6px;background:radial-gradient(ellipse at 50% 50%,#0a840a 0%,#128c12 70%,#4cae4c 100%);border-radius:3.65px / 4.8px;"></div>
<div style="left:131.3px;top:47px;width:69.4px;height:11.6px;background:#eeeedc;"></div>
<div style="left:131.3px;top:58.6px;width:69.4px;height:6.6px;background:#f0dcdc;"></div>
<div style="left:131.3px;top:47px;width:69.4px;height:0.7px;background:#c8c7b8;"></div>
<div style="left:200.6px;top:47px;width:0.7px;height:18px;background:#c8c7b8;"></div>
<svg class="ti" style="left:136.9px;top:52.8px" width="7.2" height="7.2" viewBox="0 0 8 8"><circle cx="4" cy="4" r="3.8" fill="#2a7de0"/><path d="M1 3 Q2.6 0.6 4.6 1.2 Q5.4 2.6 4 3.6 Q3.4 5.2 2 4.6 Z" fill="#7ed957"/><path d="M4.8 4.6 Q6.6 4 7 5.2 Q6.2 7 4.8 7.2 Z" fill="#f2d64a"/><path d="M1.2 2 Q4 -0.4 6.6 1.6" stroke="#cfe6ff" stroke-width="0.7" fill="none"/></svg>
<div class="t" style="left:146px;top:52.63px;font-size:5.8px;line-height:7.54px;color:#111;font-weight:bold;font-family:'Liberation Sans','Noto Sans CJK SC',sans-serif;">料位实时监测</div>
<svg style="left:185.8px;top:52.6px" width="7" height="7" viewBox="0 0 7 7"><path d="M1 0.8 L5.6 6.2 M5.6 0.8 L1 6.2" stroke="#222" stroke-width="1.2"/></svg>
<div style="left:201.3px;top:48px;width:78px;height:16.2px;background:#cccccb;"></div>
<svg class="ti" style="left:207.1px;top:53.2px" width="7.4" height="6.4" viewBox="0 0 7.4 6.4"><path d="M0.4 1 H5 L6.8 0.2 V3.2 L4.6 3.6 L2.6 5.8 L2.8 3.8 H0.4 Z" fill="#f0c820"/><path d="M3.4 0.4 L6.8 0.2 L5 2.6 Z" fill="#3a3a3a"/></svg>
<div class="t" style="left:216px;top:52.63px;font-size:5.8px;line-height:7.54px;color:#111;font-weight:bold;font-family:'Liberation Sans','Noto Sans CJK SC',sans-serif;">06-车辆位置图形</div>
<svg style="left:266.8px;top:52.6px" width="7" height="7" viewBox="0 0 7 7"><path d="M1 0.8 L5.6 6.2 M5.6 0.8 L1 6.2" stroke="#222" stroke-width="1.2"/></svg>
<div style="left:131px;top:66.3px;width:576.2px;height:399.5px;background:#eeeeee;border-left:1.5px solid #b9b9b0;border-right:1px solid #f6f6f6;"></div>
<div style="left:132.4px;top:66.3px;width:574px;height:29.4px;background:#cccccc;"></div>
<div class="t" style="left:144.1px;top:77.93px;font-size:9.8px;line-height:12.74px;color:#111;font-weight:bold;font-family:'Liberation Sans','Noto Sans CJK SC',sans-serif;width:100px;text-align:center;">580原矿仓</div>
<div style="left:152.3px;top:175.0678399999997px;width:74.9px;height:268.9321600000003px;background:linear-gradient(to right,#a2d2f2 0,#a0d0f0 9.6px,#8ac2f0 10.2px,#88c0f0 17.8px,#78b8ff 18.4px,#76b8ff 26.6px,#66b6ff 27.2px,#64b4ff 35.6px,#0486ff 36.2px,#0a8aff 41px,#1a92ff 41.6px,#1e94ff 46px,#2a9aff 46.6px,#30a0ff 52px,#3ca8ff 52.6px,#44acff 61px,#5cb6ff 61.6px,#62b8ff 70px,#70baff 70.6px,#74bcff 74.4px,#2c90f0 74.8px);border-left:0.9px solid #0a5cb8;border-top:1px solid #2a8ef0;background-origin:border-box;"></div>
<div style="left:152.3px;top:105.85px;width:74.9px;height:1.1px;background:rgba(0,0,0,0.8);"></div>
<div class="t" style="left:138.0px;top:101.27px;font-size:7.9px;line-height:10.27px;color:#1a1a1a;font-weight:bold;font-family:'Liberation Sans','Noto Sans CJK SC',sans-serif;transform:scale(0.86,1.08);transform-origin:0 50%;-webkit-text-stroke:0.3px #1a1a1a;">587</div>
<div style="left:152.3px;top:139.76px;width:74.9px;height:0.8px;background:rgba(0,0,0,0.38);"></div>
<div class="t" style="left:138.0px;top:135.03px;font-size:7.9px;line-height:10.27px;color:#1a1a1a;font-weight:bold;font-family:'Liberation Sans','Noto Sans CJK SC',sans-serif;transform:scale(0.86,1.08);transform-origin:0 50%;-webkit-text-stroke:0.3px #1a1a1a;">582</div>
<div style="left:152.3px;top:173.62px;width:74.9px;height:0.6px;background:rgba(0,0,0,0.03);"></div>
<div class="t" style="left:138.0px;top:168.79px;font-size:7.9px;line-height:10.27px;color:#1a1a1a;font-weight:bold;font-family:'Liberation Sans','Noto Sans CJK SC',sans-serif;transform:scale(0.86,1.08);transform-origin:0 50%;-webkit-text-stroke:0.3px #1a1a1a;">577</div>
<div style="left:152.3px;top:207.18px;width:74.9px;height:1.0px;background:rgba(0,0,0,0.58);"></div>
<div class="t" style="left:138.0px;top:202.55px;font-size:7.9px;line-height:10.27px;color:#1a1a1a;font-weight:bold;font-family:'Liberation Sans','Noto Sans CJK SC',sans-serif;transform:scale(0.86,1.08);transform-origin:0 50%;-webkit-text-stroke:0.3px #1a1a1a;">572</div>
<div style="left:152.3px;top:241.04px;width:74.9px;height:0.8px;background:rgba(0,0,0,0.13);"></div>
<div class="t" style="left:138.0px;top:236.31px;font-size:7.9px;line-height:10.27px;color:#1a1a1a;font-weight:bold;font-family:'Liberation Sans','Noto Sans CJK SC',sans-serif;transform:scale(0.86,1.08);transform-origin:0 50%;-webkit-text-stroke:0.3px #1a1a1a;">567</div>
<div style="left:152.3px;top:274.8px;width:74.9px;height:0.8px;background:rgba(0,0,0,0.09);"></div>
<div class="t" style="left:138.0px;top:270.07px;font-size:7.9px;line-height:10.27px;color:#1a1a1a;font-weight:bold;font-family:'Liberation Sans','Noto Sans CJK SC',sans-serif;transform:scale(0.86,1.08);transform-origin:0 50%;-webkit-text-stroke:0.3px #1a1a1a;">562</div>
<div style="left:152.3px;top:308.46px;width:74.9px;height:1.0px;background:rgba(0,0,0,0.66);"></div>
<div class="t" style="left:138.0px;top:303.83px;font-size:7.9px;line-height:10.27px;color:#1a1a1a;font-weight:bold;font-family:'Liberation Sans','Noto Sans CJK SC',sans-serif;transform:scale(0.86,1.08);transform-origin:0 50%;-webkit-text-stroke:0.3px #1a1a1a;">557</div>
<div style="left:152.3px;top:342.07px;width:74.9px;height:1.3px;background:rgba(0,0,0,0.93);"></div>
<div class="t" style="left:138.0px;top:337.59px;font-size:7.9px;line-height:10.27px;color:#1a1a1a;font-weight:bold;font-family:'Liberation Sans','Noto Sans CJK SC',sans-serif;transform:scale(0.86,1.08);transform-origin:0 50%;-webkit-text-stroke:0.3px #1a1a1a;">552</div>
<div style="left:152.3px;top:376.08px;width:74.9px;height:0.8px;background:rgba(0,0,0,0.3);"></div>
<div class="t" style="left:138.0px;top:371.35px;font-size:7.9px;line-height:10.27px;color:#1a1a1a;font-weight:bold;font-family:'Liberation Sans','Noto Sans CJK SC',sans-serif;transform:scale(0.86,1.08);transform-origin:0 50%;-webkit-text-stroke:0.3px #1a1a1a;">547</div>
<div style="left:152.3px;top:409.74px;width:74.9px;height:1.0px;background:rgba(0,0,0,0.8);"></div>
<div class="t" style="left:138.0px;top:405.11px;font-size:7.9px;line-height:10.27px;color:#1a1a1a;font-weight:bold;font-family:'Liberation Sans','Noto Sans CJK SC',sans-serif;transform:scale(0.86,1.08);transform-origin:0 50%;-webkit-text-stroke:0.3px #1a1a1a;">542</div>
<div style="left:152.3px;top:443.35px;width:74.9px;height:1.3px;background:rgba(0,0,0,0.85);"></div>
<div class="t" style="left:138.0px;top:438.87px;font-size:7.9px;line-height:10.27px;color:#1a1a1a;font-weight:bold;font-family:'Liberation Sans','Noto Sans CJK SC',sans-serif;transform:scale(0.86,1.08);transform-origin:0 50%;-webkit-text-stroke:0.3px #1a1a1a;">537</div>
<div class="t" style="left:152.3px;top:107.08px;font-size:9.1px;line-height:11.83px;color:#3a3a3a;width:74.9px;text-align:center;-webkit-text-stroke:0.25px #3a3a3a;transform:scaleY(1.05);">10.17 m</div>
<div class="t" style="left:152.3px;top:404.52px;font-size:9.1px;line-height:11.83px;color:#2f3a48;width:74.9px;text-align:center;-webkit-text-stroke:0.2px #2f3a48;transform:scaleY(1.03);">39.83</div>
<div class="t" style="left:152.3px;top:446.11px;font-size:8.9px;line-height:11.57px;color:#ff1a1a;font-weight:bold;font-family:'Liberation Sans','Noto Sans CJK SC',sans-serif;width:74.9px;text-align:center;transform:none;">576.83 m</div>
<div style="left:231.9px;top:105.8px;width:7.0px;height:338.8px;background:linear-gradient(to bottom,#0000ff 0%,#0010ff 8%,#0060ff 20%,#0090f0 25%,#00a8c8 30%,#00b0a0 35%,#00c868 40%,#00d850 43%,#00f010 46.5%,#00ff00 49%,#20f800 54%,#60f000 60%,#80e800 65%,#b0e800 69.5%,#c8e800 72.5%,#e0d800 74%,#f0d000 77.5%,#f0b800 80%,#f0a000 82.5%,#f08000 85.5%,#f06800 88.5%,#ff5000 91.5%,#ff3000 94.5%,#ff1800 97.5%,#ff0000 100%);"></div>
<div style="left:247.37px;top:66.3px;width:1px;height:399.5px;background:#c2c2c2;"></div>
<div class="t" style="left:259.25px;top:77.93px;font-size:9.8px;line-height:12.74px;color:#111;font-weight:bold;font-family:'Liberation Sans','Noto Sans CJK SC',sans-serif;width:100px;text-align:center;">530成品矿仓</div>
<div style="left:267.4px;top:207.68px;width:74.9px;height:236.32px;background:linear-gradient(to right,#a2d2f2 0,#a0d0f0 9.6px,#8ac2f0 10.2px,#88c0f0 17.8px,#78b8ff 18.4px,#76b8ff 26.6px,#66b6ff 27.2px,#64b4ff 35.6px,#0486ff 36.2px,#0a8aff 41px,#1a92ff 41.6px,#1e94ff 46px,#2a9aff 46.6px,#30a0ff 52px,#3ca8ff 52.6px,#44acff 61px,#5cb6ff 61.6px,#62b8ff 70px,#70baff 70.6px,#74bcff 74.4px,#2c90f0 74.8px);border-left:0.9px solid #0a5cb8;border-top:1px solid #2a8ef0;background-origin:border-box;"></div>
<div style="left:267.4px;top:105.85px;width:74.9px;height:1.1px;background:rgba(0,0,0,0.8);"></div>
<div class="t" style="left:253.1px;top:101.27px;font-size:7.9px;line-height:10.27px;color:#1a1a1a;font-weight:bold;font-family:'Liberation Sans','Noto Sans CJK SC',sans-serif;transform:scale(0.86,1.08);transform-origin:0 50%;-webkit-text-stroke:0.3px #1a1a1a;">530</div>
<div style="left:267.4px;top:139.76px;width:74.9px;height:0.8px;background:rgba(0,0,0,0.38);"></div>
<div class="t" style="left:253.1px;top:135.03px;font-size:7.9px;line-height:10.27px;color:#1a1a1a;font-weight:bold;font-family:'Liberation Sans','Noto Sans CJK SC',sans-serif;transform:scale(0.86,1.08);transform-origin:0 50%;-webkit-text-stroke:0.3px #1a1a1a;">527</div>
<div style="left:267.4px;top:173.62px;width:74.9px;height:0.6px;background:rgba(0,0,0,0.03);"></div>
<div class="t" style="left:253.1px;top:168.79px;font-size:7.9px;line-height:10.27px;color:#1a1a1a;font-weight:bold;font-family:'Liberation Sans','Noto Sans CJK SC',sans-serif;transform:scale(0.86,1.08);transform-origin:0 50%;-webkit-text-stroke:0.3px #1a1a1a;">524</div>
<div style="left:267.4px;top:207.18px;width:74.9px;height:1.0px;background:rgba(0,0,0,0.58);"></div>
<div class="t" style="left:253.1px;top:202.55px;font-size:7.9px;line-height:10.27px;color:#1a1a1a;font-weight:bold;font-family:'Liberation Sans','Noto Sans CJK SC',sans-serif;transform:scale(0.86,1.08);transform-origin:0 50%;-webkit-text-stroke:0.3px #1a1a1a;">521</div>
<div style="left:267.4px;top:241.04px;width:74.9px;height:0.8px;background:rgba(0,0,0,0.13);"></div>
<div class="t" style="left:253.1px;top:236.31px;font-size:7.9px;line-height:10.27px;color:#1a1a1a;font-weight:bold;font-family:'Liberation Sans','Noto Sans CJK SC',sans-serif;transform:scale(0.86,1.08);transform-origin:0 50%;-webkit-text-stroke:0.3px #1a1a1a;">518</div>
<div style="left:267.4px;top:274.8px;width:74.9px;height:0.8px;background:rgba(0,0,0,0.09);"></div>
<div class="t" style="left:253.1px;top:270.07px;font-size:7.9px;line-height:10.27px;color:#1a1a1a;font-weight:bold;font-family:'Liberation Sans','Noto Sans CJK SC',sans-serif;transform:scale(0.86,1.08);transform-origin:0 50%;-webkit-text-stroke:0.3px #1a1a1a;">515</div>
<div style="left:267.4px;top:308.46px;width:74.9px;height:1.0px;background:rgba(0,0,0,0.66);"></div>
<div class="t" style="left:253.1px;top:303.83px;font-size:7.9px;line-height:10.27px;color:#1a1a1a;font-weight:bold;font-family:'Liberation Sans','Noto Sans CJK SC',sans-serif;transform:scale(0.86,1.08);transform-origin:0 50%;-webkit-text-stroke:0.3px #1a1a1a;">512</div>
<div style="left:267.4px;top:342.07px;width:74.9px;height:1.3px;background:rgba(0,0,0,0.93);"></div>
<div class="t" style="left:253.1px;top:337.59px;font-size:7.9px;line-height:10.27px;color:#1a1a1a;font-weight:bold;font-family:'Liberation Sans','Noto Sans CJK SC',sans-serif;transform:scale(0.86,1.08);transform-origin:0 50%;-webkit-text-stroke:0.3px #1a1a1a;">509</div>
<div style="left:267.4px;top:376.08px;width:74.9px;height:0.8px;background:rgba(0,0,0,0.3);"></div>
<div class="t" style="left:253.1px;top:371.35px;font-size:7.9px;line-height:10.27px;color:#1a1a1a;font-weight:bold;font-family:'Liberation Sans','Noto Sans CJK SC',sans-serif;transform:scale(0.86,1.08);transform-origin:0 50%;-webkit-text-stroke:0.3px #1a1a1a;">506</div>
<div style="left:267.4px;top:409.74px;width:74.9px;height:1.0px;background:rgba(0,0,0,0.8);"></div>
<div class="t" style="left:253.1px;top:405.11px;font-size:7.9px;line-height:10.27px;color:#1a1a1a;font-weight:bold;font-family:'Liberation Sans','Noto Sans CJK SC',sans-serif;transform:scale(0.86,1.08);transform-origin:0 50%;-webkit-text-stroke:0.3px #1a1a1a;">503</div>
<div style="left:267.4px;top:443.35px;width:74.9px;height:1.3px;background:rgba(0,0,0,0.85);"></div>
<div class="t" style="left:253.1px;top:438.87px;font-size:7.9px;line-height:10.27px;color:#1a1a1a;font-weight:bold;font-family:'Liberation Sans','Noto Sans CJK SC',sans-serif;transform:scale(0.86,1.08);transform-origin:0 50%;-webkit-text-stroke:0.3px #1a1a1a;">500</div>
<div class="t" style="left:267.4px;top:107.08px;font-size:9.1px;line-height:11.83px;color:#3a3a3a;width:74.9px;text-align:center;-webkit-text-stroke:0.25px #3a3a3a;transform:scaleY(1.05);">9.00 m</div>
<div class="t" style="left:267.4px;top:404.52px;font-size:9.1px;line-height:11.83px;color:#2f3a48;width:74.9px;text-align:center;-webkit-text-stroke:0.2px #2f3a48;transform:scaleY(1.03);">21.00</div>
<div class="t" style="left:267.4px;top:446.11px;font-size:8.9px;line-height:11.57px;color:#ff1a1a;font-weight:bold;font-family:'Liberation Sans','Noto Sans CJK SC',sans-serif;width:74.9px;text-align:center;transform:none;">521.00 m</div>
<div style="left:346.7px;top:105.8px;width:7.0px;height:338.8px;background:linear-gradient(to bottom,#0000ff 0%,#0010ff 8%,#0060ff 20%,#0090f0 25%,#00a8c8 30%,#00b0a0 35%,#00c868 40%,#00d850 43%,#00f010 46.5%,#00ff00 49%,#20f800 54%,#60f000 60%,#80e800 65%,#b0e800 69.5%,#c8e800 72.5%,#e0d800 74%,#f0d000 77.5%,#f0b800 80%,#f0a000 82.5%,#f08000 85.5%,#f06800 88.5%,#ff5000 91.5%,#ff3000 94.5%,#ff1800 97.5%,#ff0000 100%);"></div>
<div style="left:362.03999999999996px;top:66.3px;width:1px;height:399.5px;background:#c2c2c2;"></div>
<div class="t" style="left:374.4px;top:77.93px;font-size:9.8px;line-height:12.74px;color:#111;font-weight:bold;font-family:'Liberation Sans','Noto Sans CJK SC',sans-serif;width:100px;text-align:center;">1#溜井</div>
<div style="left:382.5px;top:396.6009600000001px;width:74.9px;height:47.3990399999999px;background:linear-gradient(to right,#a2d2f2 0,#a0d0f0 9.6px,#8ac2f0 10.2px,#88c0f0 17.8px,#78b8ff 18.4px,#76b8ff 26.6px,#66b6ff 27.2px,#64b4ff 35.6px,#0486ff 36.2px,#0a8aff 41px,#1a92ff 41.6px,#1e94ff 46px,#2a9aff 46.6px,#30a0ff 52px,#3ca8ff 52.6px,#44acff 61px,#5cb6ff 61.6px,#62b8ff 70px,#70baff 70.6px,#74bcff 74.4px,#2c90f0 74.8px);border-left:0.9px solid #0a5cb8;border-top:1px solid #2a8ef0;background-origin:border-box;"></div>
<div style="left:382.5px;top:105.85px;width:74.9px;height:1.1px;background:rgba(0,0,0,0.8);"></div>
<div class="t" style="left:368.2px;top:101.27px;font-size:7.9px;line-height:10.27px;color:#1a1a1a;font-weight:bold;font-family:'Liberation Sans','Noto Sans CJK SC',sans-serif;transform:scale(0.86,1.08);transform-origin:0 50%;-webkit-text-stroke:0.3px #1a1a1a;">730</div>
<div style="left:382.5px;top:139.76px;width:74.9px;height:0.8px;background:rgba(0,0,0,0.38);"></div>
<div class="t" style="left:368.2px;top:135.03px;font-size:7.9px;line-height:10.27px;color:#1a1a1a;font-weight:bold;font-family:'Liberation Sans','Noto Sans CJK SC',sans-serif;transform:scale(0.86,1.08);transform-origin:0 50%;-webkit-text-stroke:0.3px #1a1a1a;">720</div>
<div style="left:382.5px;top:173.62px;width:74.9px;height:0.6px;background:rgba(0,0,0,0.03);"></div>
<div class="t" style="left:368.2px;top:168.79px;font-size:7.9px;line-height:10.27px;color:#1a1a1a;font-weight:bold;font-family:'Liberation Sans','Noto Sans CJK SC',sans-serif;transform:scale(0.86,1.08);transform-origin:0 50%;-webkit-text-stroke:0.3px #1a1a1a;">710</div>
<div style="left:382.5px;top:207.18px;width:74.9px;height:1.0px;background:rgba(0,0,0,0.58);"></div>
<div class="t" style="left:368.2px;top:202.55px;font-size:7.9px;line-height:10.27px;color:#1a1a1a;font-weight:bold;font-family:'Liberation Sans','Noto Sans CJK SC',sans-serif;transform:scale(0.86,1.08);transform-origin:0 50%;-webkit-text-stroke:0.3px #1a1a1a;">700</div>
<div style="left:382.5px;top:241.04px;width:74.9px;height:0.8px;background:rgba(0,0,0,0.13);"></div>
<div class="t" style="left:368.2px;top:236.31px;font-size:7.9px;line-height:10.27px;color:#1a1a1a;font-weight:bold;font-family:'Liberation Sans','Noto Sans CJK SC',sans-serif;transform:scale(0.86,1.08);transform-origin:0 50%;-webkit-text-stroke:0.3px #1a1a1a;">690</div>
<div style="left:382.5px;top:274.8px;width:74.9px;height:0.8px;background:rgba(0,0,0,0.09);"></div>
<div class="t" style="left:368.2px;top:270.07px;font-size:7.9px;line-height:10.27px;color:#1a1a1a;font-weight:bold;font-family:'Liberation Sans','Noto Sans CJK SC',sans-serif;transform:scale(0.86,1.08);transform-origin:0 50%;-webkit-text-stroke:0.3px #1a1a1a;">680</div>
<div style="left:382.5px;top:308.46px;width:74.9px;height:1.0px;background:rgba(0,0,0,0.66);"></div>
<div class="t" style="left:368.2px;top:303.83px;font-size:7.9px;line-height:10.27px;color:#1a1a1a;font-weight:bold;font-family:'Liberation Sans','Noto Sans CJK SC',sans-serif;transform:scale(0.86,1.08);transform-origin:0 50%;-webkit-text-stroke:0.3px #1a1a1a;">670</div>
<div style="left:382.5px;top:342.07px;width:74.9px;height:1.3px;background:rgba(0,0,0,0.93);"></div>
<div class="t" style="left:368.2px;top:337.59px;font-size:7.9px;line-height:10.27px;color:#1a1a1a;font-weight:bold;font-family:'Liberation Sans','Noto Sans CJK SC',sans-serif;transform:scale(0.86,1.08);transform-origin:0 50%;-webkit-text-stroke:0.3px #1a1a1a;">660</div>
<div style="left:382.5px;top:376.08px;width:74.9px;height:0.8px;background:rgba(0,0,0,0.3);"></div>
<div class="t" style="left:368.2px;top:371.35px;font-size:7.9px;line-height:10.27px;color:#1a1a1a;font-weight:bold;font-family:'Liberation Sans','Noto Sans CJK SC',sans-serif;transform:scale(0.86,1.08);transform-origin:0 50%;-webkit-text-stroke:0.3px #1a1a1a;">650</div>
<div style="left:382.5px;top:409.74px;width:74.9px;height:1.0px;background:rgba(0,0,0,0.8);"></div>
<div class="t" style="left:368.2px;top:405.11px;font-size:7.9px;line-height:10.27px;color:#1a1a1a;font-weight:bold;font-family:'Liberation Sans','Noto Sans CJK SC',sans-serif;transform:scale(0.86,1.08);transform-origin:0 50%;-webkit-text-stroke:0.3px #1a1a1a;">640</div>
<div style="left:382.5px;top:443.35px;width:74.9px;height:1.3px;background:rgba(0,0,0,0.85);"></div>
<div class="t" style="left:368.2px;top:438.87px;font-size:7.9px;line-height:10.27px;color:#1a1a1a;font-weight:bold;font-family:'Liberation Sans','Noto Sans CJK SC',sans-serif;transform:scale(0.86,1.08);transform-origin:0 50%;-webkit-text-stroke:0.3px #1a1a1a;">630</div>
<div class="t" style="left:382.5px;top:107.08px;font-size:9.1px;line-height:11.83px;color:#3a3a3a;width:74.9px;text-align:center;-webkit-text-stroke:0.25px #3a3a3a;transform:scaleY(1.05);">85.96 m</div>
<div class="t" style="left:382.5px;top:404.52px;font-size:9.1px;line-height:11.83px;color:#2f3a48;width:74.9px;text-align:center;-webkit-text-stroke:0.2px #2f3a48;transform:scaleY(1.03);">14.04</div>
<div class="t" style="left:382.5px;top:446.11px;font-size:8.9px;line-height:11.57px;color:#ff1a1a;font-weight:bold;font-family:'Liberation Sans','Noto Sans CJK SC',sans-serif;width:74.9px;text-align:center;transform:none;">644.04 m</div>
<div style="left:461.5px;top:105.8px;width:7.0px;height:338.8px;background:linear-gradient(to bottom,#0000ff 0%,#0010ff 8%,#0060ff 20%,#0090f0 25%,#00a8c8 30%,#00b0a0 35%,#00c868 40%,#00d850 43%,#00f010 46.5%,#00ff00 49%,#20f800 54%,#60f000 60%,#80e800 65%,#b0e800 69.5%,#c8e800 72.5%,#e0d800 74%,#f0d000 77.5%,#f0b800 80%,#f0a000 82.5%,#f08000 85.5%,#f06800 88.5%,#ff5000 91.5%,#ff3000 94.5%,#ff1800 97.5%,#ff0000 100%);"></div>
<div style="left:476.71px;top:66.3px;width:1px;height:399.5px;background:#c2c2c2;"></div>
<div class="t" style="left:489.55000000000007px;top:77.93px;font-size:9.8px;line-height:12.74px;color:#111;font-weight:bold;font-family:'Liberation Sans','Noto Sans CJK SC',sans-serif;width:100px;text-align:center;">2#溜井</div>
<div style="left:497.59999999999997px;top:327.05536000000006px;width:74.9px;height:116.94463999999994px;background:linear-gradient(to right,#a2d2f2 0,#a0d0f0 9.6px,#8ac2f0 10.2px,#88c0f0 17.8px,#78b8ff 18.4px,#76b8ff 26.6px,#66b6ff 27.2px,#64b4ff 35.6px,#0486ff 36.2px,#0a8aff 41px,#1a92ff 41.6px,#1e94ff 46px,#2a9aff 46.6px,#30a0ff 52px,#3ca8ff 52.6px,#44acff 61px,#5cb6ff 61.6px,#62b8ff 70px,#70baff 70.6px,#74bcff 74.4px,#2c90f0 74.8px);border-left:0.9px solid #0a5cb8;border-top:1px solid #2a8ef0;background-origin:border-box;"></div>
<div style="left:497.59999999999997px;top:105.85px;width:74.9px;height:1.1px;background:rgba(0,0,0,0.8);"></div>
<div class="t" style="left:483.29999999999995px;top:101.27px;font-size:7.9px;line-height:10.27px;color:#1a1a1a;font-weight:bold;font-family:'Liberation Sans','Noto Sans CJK SC',sans-serif;transform:scale(0.86,1.08);transform-origin:0 50%;-webkit-text-stroke:0.3px #1a1a1a;">682</div>
<div style="left:497.59999999999997px;top:139.76px;width:74.9px;height:0.8px;background:rgba(0,0,0,0.38);"></div>
<div class="t" style="left:483.29999999999995px;top:135.03px;font-size:7.9px;line-height:10.27px;color:#1a1a1a;font-weight:bold;font-family:'Liberation Sans','Noto Sans CJK SC',sans-serif;transform:scale(0.86,1.08);transform-origin:0 50%;-webkit-text-stroke:0.3px #1a1a1a;">672</div>
<div style="left:497.59999999999997px;top:173.62px;width:74.9px;height:0.6px;background:rgba(0,0,0,0.03);"></div>
<div class="t" style="left:483.29999999999995px;top:168.79px;font-size:7.9px;line-height:10.27px;color:#1a1a1a;font-weight:bold;font-family:'Liberation Sans','Noto Sans CJK SC',sans-serif;transform:scale(0.86,1.08);transform-origin:0 50%;-webkit-text-stroke:0.3px #1a1a1a;">662</div>
<div style="left:497.59999999999997px;top:207.18px;width:74.9px;height:1.0px;background:rgba(0,0,0,0.58);"></div>
<div class="t" style="left:483.29999999999995px;top:202.55px;font-size:7.9px;line-height:10.27px;color:#1a1a1a;font-weight:bold;font-family:'Liberation Sans','Noto Sans CJK SC',sans-serif;transform:scale(0.86,1.08);transform-origin:0 50%;-webkit-text-stroke:0.3px #1a1a1a;">652</div>
<div style="left:497.59999999999997px;top:241.04px;width:74.9px;height:0.8px;background:rgba(0,0,0,0.13);"></div>
<div class="t" style="left:483.29999999999995px;top:236.31px;font-size:7.9px;line-height:10.27px;color:#1a1a1a;font-weight:bold;font-family:'Liberation Sans','Noto Sans CJK SC',sans-serif;transform:scale(0.86,1.08);transform-origin:0 50%;-webkit-text-stroke:0.3px #1a1a1a;">642</div>
<div style="left:497.59999999999997px;top:274.8px;width:74.9px;height:0.8px;background:rgba(0,0,0,0.09);"></div>
<div class="t" style="left:483.29999999999995px;top:270.07px;font-size:7.9px;line-height:10.27px;color:#1a1a1a;font-weight:bold;font-family:'Liberation Sans','Noto Sans CJK SC',sans-serif;transform:scale(0.86,1.08);transform-origin:0 50%;-webkit-text-stroke:0.3px #1a1a1a;">632</div>
<div style="left:497.59999999999997px;top:308.46px;width:74.9px;height:1.0px;background:rgba(0,0,0,0.66);"></div>
<div class="t" style="left:483.29999999999995px;top:303.83px;font-size:7.9px;line-height:10.27px;color:#1a1a1a;font-weight:bold;font-family:'Liberation Sans','Noto Sans CJK SC',sans-serif;transform:scale(0.86,1.08);transform-origin:0 50%;-webkit-text-stroke:0.3px #1a1a1a;">622</div>
<div style="left:497.59999999999997px;top:342.07px;width:74.9px;height:1.3px;background:rgba(0,0,0,0.93);"></div>
<div class="t" style="left:483.29999999999995px;top:337.59px;font-size:7.9px;line-height:10.27px;color:#1a1a1a;font-weight:bold;font-family:'Liberation Sans','Noto Sans CJK SC',sans-serif;transform:scale(0.86,1.08);transform-origin:0 50%;-webkit-text-stroke:0.3px #1a1a1a;">612</div>
<div style="left:497.59999999999997px;top:376.08px;width:74.9px;height:0.8px;background:rgba(0,0,0,0.3);"></div>
<div class="t" style="left:483.29999999999995px;top:371.35px;font-size:7.9px;line-height:10.27px;color:#1a1a1a;font-weight:bold;font-family:'Liberation Sans','Noto Sans CJK SC',sans-serif;transform:scale(0.86,1.08);transform-origin:0 50%;-webkit-text-stroke:0.3px #1a1a1a;">602</div>
<div style="left:497.59999999999997px;top:409.74px;width:74.9px;height:1.0px;background:rgba(0,0,0,0.8);"></div>
<div class="t" style="left:483.29999999999995px;top:405.11px;font-size:7.9px;line-height:10.27px;color:#1a1a1a;font-weight:bold;font-family:'Liberation Sans','Noto Sans CJK SC',sans-serif;transform:scale(0.86,1.08);transform-origin:0 50%;-webkit-text-stroke:0.3px #1a1a1a;">592</div>
<div style="left:497.59999999999997px;top:443.35px;width:74.9px;height:1.3px;background:rgba(0,0,0,0.85);"></div>
<div class="t" style="left:483.29999999999995px;top:438.87px;font-size:7.9px;line-height:10.27px;color:#1a1a1a;font-weight:bold;font-family:'Liberation Sans','Noto Sans CJK SC',sans-serif;transform:scale(0.86,1.08);transform-origin:0 50%;-webkit-text-stroke:0.3px #1a1a1a;">582</div>
<div class="t" style="left:497.59999999999997px;top:107.08px;font-size:9.1px;line-height:11.83px;color:#3a3a3a;width:74.9px;text-align:center;-webkit-text-stroke:0.25px #3a3a3a;transform:scaleY(1.05);">65.36 m</div>
<div class="t" style="left:497.59999999999997px;top:404.52px;font-size:9.1px;line-height:11.83px;color:#2f3a48;width:74.9px;text-align:center;-webkit-text-stroke:0.2px #2f3a48;transform:scaleY(1.03);">34.64</div>
<div class="t" style="left:497.59999999999997px;top:446.11px;font-size:8.9px;line-height:11.57px;color:#ff1a1a;font-weight:bold;font-family:'Liberation Sans','Noto Sans CJK SC',sans-serif;width:74.9px;text-align:center;transform:none;">616.64 m</div>
<div style="left:576.3px;top:105.8px;width:7.0px;height:338.8px;background:linear-gradient(to bottom,#0000ff 0%,#0010ff 8%,#0060ff 20%,#0090f0 25%,#00a8c8 30%,#00b0a0 35%,#00c868 40%,#00d850 43%,#00f010 46.5%,#00ff00 49%,#20f800 54%,#60f000 60%,#80e800 65%,#b0e800 69.5%,#c8e800 72.5%,#e0d800 74%,#f0d000 77.5%,#f0b800 80%,#f0a000 82.5%,#f08000 85.5%,#f06800 88.5%,#ff5000 91.5%,#ff3000 94.5%,#ff1800 97.5%,#ff0000 100%);"></div>
<div style="left:591.38px;top:66.3px;width:1px;height:399.5px;background:#c2c2c2;"></div>
<div class="t" style="left:604.7px;top:77.93px;font-size:9.8px;line-height:12.74px;color:#111;font-weight:bold;font-family:'Liberation Sans','Noto Sans CJK SC',sans-serif;width:100px;text-align:center;">3#溜井</div>
<div style="left:612.7px;top:105.85px;width:74.9px;height:1.1px;background:rgba(0,0,0,0.8);"></div>
<div class="t" style="left:598.4px;top:101.27px;font-size:7.9px;line-height:10.27px;color:#1a1a1a;font-weight:bold;font-family:'Liberation Sans','Noto Sans CJK SC',sans-serif;transform:scale(0.86,1.08);transform-origin:0 50%;-webkit-text-stroke:0.3px #1a1a1a;">632</div>
<div style="left:612.7px;top:139.76px;width:74.9px;height:0.8px;background:rgba(0,0,0,0.38);"></div>
<div class="t" style="left:598.4px;top:135.03px;font-size:7.9px;line-height:10.27px;color:#1a1a1a;font-weight:bold;font-family:'Liberation Sans','Noto Sans CJK SC',sans-serif;transform:scale(0.86,1.08);transform-origin:0 50%;-webkit-text-stroke:0.3px #1a1a1a;">627</div>
<div style="left:612.7px;top:173.62px;width:74.9px;height:0.6px;background:rgba(0,0,0,0.03);"></div>
<div class="t" style="left:598.4px;top:168.79px;font-size:7.9px;line-height:10.27px;color:#1a1a1a;font-weight:bold;font-family:'Liberation Sans','Noto Sans CJK SC',sans-serif;transform:scale(0.86,1.08);transform-origin:0 50%;-webkit-text-stroke:0.3px #1a1a1a;">622</div>
<div style="left:612.7px;top:207.18px;width:74.9px;height:1.0px;background:rgba(0,0,0,0.58);"></div>
<div class="t" style="left:598.4px;top:202.55px;font-size:7.9px;line-height:10.27px;color:#1a1a1a;font-weight:bold;font-family:'Liberation Sans','Noto Sans CJK SC',sans-serif;transform:scale(0.86,1.08);transform-origin:0 50%;-webkit-text-stroke:0.3px #1a1a1a;">617</div>
<div style="left:612.7px;top:241.04px;width:74.9px;height:0.8px;background:rgba(0,0,0,0.13);"></div>
<div class="t" style="left:598.4px;top:236.31px;font-size:7.9px;line-height:10.27px;color:#1a1a1a;font-weight:bold;font-family:'Liberation Sans','Noto Sans CJK SC',sans-serif;transform:scale(0.86,1.08);transform-origin:0 50%;-webkit-text-stroke:0.3px #1a1a1a;">612</div>
<div style="left:612.7px;top:274.8px;width:74.9px;height:0.8px;background:rgba(0,0,0,0.09);"></div>
<div class="t" style="left:598.4px;top:270.07px;font-size:7.9px;line-height:10.27px;color:#1a1a1a;font-weight:bold;font-family:'Liberation Sans','Noto Sans CJK SC',sans-serif;transform:scale(0.86,1.08);transform-origin:0 50%;-webkit-text-stroke:0.3px #1a1a1a;">607</div>
<div style="left:612.7px;top:308.46px;width:74.9px;height:1.0px;background:rgba(0,0,0,0.66);"></div>
<div class="t" style="left:598.4px;top:303.83px;font-size:7.9px;line-height:10.27px;color:#1a1a1a;font-weight:bold;font-family:'Liberation Sans','Noto Sans CJK SC',sans-serif;transform:scale(0.86,1.08);transform-origin:0 50%;-webkit-text-stroke:0.3px #1a1a1a;">602</div>
<div style="left:612.7px;top:342.07px;width:74.9px;height:1.3px;background:rgba(0,0,0,0.93);"></div>
<div class="t" style="left:598.4px;top:337.59px;font-size:7.9px;line-height:10.27px;color:#1a1a1a;font-weight:bold;font-family:'Liberation Sans','Noto Sans CJK SC',sans-serif;transform:scale(0.86,1.08);transform-origin:0 50%;-webkit-text-stroke:0.3px #1a1a1a;">597</div>
<div style="left:612.7px;top:376.08px;width:74.9px;height:0.8px;background:rgba(0,0,0,0.3);"></div>
<div class="t" style="left:598.4px;top:371.35px;font-size:7.9px;line-height:10.27px;color:#1a1a1a;font-weight:bold;font-family:'Liberation Sans','Noto Sans CJK SC',sans-serif;transform:scale(0.86,1.08);transform-origin:0 50%;-webkit-text-stroke:0.3px #1a1a1a;">592</div>
<div style="left:612.7px;top:409.74px;width:74.9px;height:1.0px;background:rgba(0,0,0,0.8);"></div>
<div class="t" style="left:598.4px;top:405.11px;font-size:7.9px;line-height:10.27px;color:#1a1a1a;font-weight:bold;font-family:'Liberation Sans','Noto Sans CJK SC',sans-serif;transform:scale(0.86,1.08);transform-origin:0 50%;-webkit-text-stroke:0.3px #1a1a1a;">587</div>
<div style="left:612.7px;top:443.35px;width:74.9px;height:1.3px;background:rgba(0,0,0,0.85);"></div>
<div class="t" style="left:598.4px;top:438.87px;font-size:7.9px;line-height:10.27px;color:#1a1a1a;font-weight:bold;font-family:'Liberation Sans','Noto Sans CJK SC',sans-serif;transform:scale(0.86,1.08);transform-origin:0 50%;-webkit-text-stroke:0.3px #1a1a1a;">582</div>
<div class="t" style="left:612.7px;top:107.08px;font-size:9.1px;line-height:11.83px;color:#3a3a3a;width:74.9px;text-align:center;-webkit-text-stroke:0.25px #3a3a3a;transform:scaleY(1.05);">50.00 m</div>
<div class="t" style="left:612.7px;top:404.52px;font-size:9.1px;line-height:11.83px;color:#2f3a48;width:74.9px;text-align:center;-webkit-text-stroke:0.2px #2f3a48;transform:scaleY(1.03);">0.00</div>
<div class="t" style="left:612.7px;top:446.11px;font-size:8.9px;line-height:11.57px;color:#ff1a1a;font-weight:bold;font-family:'Liberation Sans','Noto Sans CJK SC',sans-serif;width:74.9px;text-align:center;transform:none;">582.00 m</div>
<div style="left:691.1px;top:105.8px;width:7.0px;height:338.8px;background:linear-gradient(to bottom,#0000ff 0%,#0010ff 8%,#0060ff 20%,#0090f0 25%,#00a8c8 30%,#00b0a0 35%,#00c868 40%,#00d850 43%,#00f010 46.5%,#00ff00 49%,#20f800 54%,#60f000 60%,#80e800 65%,#b0e800 69.5%,#c8e800 72.5%,#e0d800 74%,#f0d000 77.5%,#f0b800 80%,#f0a000 82.5%,#f08000 85.5%,#f06800 88.5%,#ff5000 91.5%,#ff3000 94.5%,#ff1800 97.5%,#ff0000 100%);"></div>
<div style="left:417px;top:468px;width:4px;height:0.8px;background:#aaa99a;"></div>
<div class="t" style="left:712.5px;top:49.53px;font-size:5.8px;line-height:7.54px;color:#111;font-weight:bold;font-family:'Liberation Sans','Noto Sans CJK SC',sans-serif;">属性视图</div>
<div class="t" style="left:826px;top:49.23px;font-size:5.8px;line-height:7.54px;color:#555;">页眉</div>
<div style="left:711.8px;top:58.8px;width:127.2px;height:541px;background:#fff;"></div>
<div style="left:711.8px;top:58.6px;width:127.2px;height:9.97px;background:#9a9a9a;"></div>
<svg style="left:714.3px;top:62.6px" width="4" height="3" viewBox="0 0 4 3"><path d="M0.2 0.3 H3.6 L1.9 2.6 Z" fill="#ddd"/></svg>
<div class="t" style="left:722.8px;top:61.32px;font-size:5.8px;line-height:7.54px;color:#fff;font-weight:bold;font-family:'Liberation Sans','Noto Sans CJK SC',sans-serif;">一般</div>
<div style="left:711.8px;top:68.57000000000001px;width:127.2px;height:9.97px;background:#eeeeee;border-bottom:0.8px solid #d2bcbc;"></div>
<div style="left:774.2px;top:68.57000000000001px;width:0.8px;height:9.97px;background:#d2bcbc;"></div>
<div class="t" style="left:723.3px;top:70.99px;font-size:5.8px;line-height:7.54px;color:#2a2a2a;-webkit-text-stroke:0.15px #2a2a2a;">标识符</div>
<div class="t" style="left:776.8000000000001px;top:70.84px;font-size:5.4px;line-height:7.02px;color:#555;">2C4A8E20-4A1D-4E··</div>
<div style="left:711.8px;top:78.54px;width:127.2px;height:9.97px;background:#ffffff;border-bottom:0.8px solid #d2bcbc;"></div>
<div style="left:774.2px;top:78.54px;width:0.8px;height:9.97px;background:#d2bcbc;"></div>
<div class="t" style="left:723.3px;top:80.96px;font-size:5.8px;line-height:7.54px;color:#2a2a2a;-webkit-text-stroke:0.15px #2a2a2a;">名称</div>
<div class="t" style="left:776.8000000000001px;top:80.81px;font-size:5.4px;line-height:7.02px;color:#555;">06-车辆位置监控</div>
<div style="left:711.8px;top:88.51px;width:127.2px;height:9.97px;background:#eeeeee;border-bottom:0.8px solid #d2bcbc;"></div>
<div style="left:774.2px;top:88.51px;width:0.8px;height:9.97px;background:#d2bcbc;"></div>
<div class="t" style="left:723.3px;top:90.93px;font-size:5.8px;line-height:7.54px;color:#111;font-weight:bold;font-family:'Liberation Sans','Noto Sans CJK SC',sans-serif;">描述</div>
<div class="t" style="left:776.8000000000001px;top:90.78px;font-size:5.4px;line-height:7.02px;color:#222;"></div>
<div style="left:711.8px;top:98.48px;width:127.2px;height:9.97px;background:#ffffff;border-bottom:0.8px solid #d2bcbc;"></div>
<div style="left:774.2px;top:98.48px;width:0.8px;height:9.97px;background:#d2bcbc;"></div>
<div class="t" style="left:723.3px;top:100.9px;font-size:5.8px;line-height:7.54px;color:#2a2a2a;-webkit-text-stroke:0.15px #2a2a2a;">创建者(时间)</div>
<div class="t" style="left:776.8000000000001px;top:100.75px;font-size:5.4px;line-height:7.02px;color:#555;">2015/09/09-8:10:41··</div>
<div style="left:711.8px;top:108.45px;width:127.2px;height:9.97px;background:#eeeeee;border-bottom:0.8px solid #d2bcbc;"></div>
<div style="left:774.2px;top:108.45px;width:0.8px;height:9.97px;background:#d2bcbc;"></div>
<div class="t" style="left:723.3px;top:110.87px;font-size:5.8px;line-height:7.54px;color:#2a2a2a;-webkit-text-stroke:0.15px #2a2a2a;">修改者(时间)</div>
<div class="t" style="left:776.8000000000001px;top:110.72px;font-size:5.4px;line-height:7.02px;color:#555;">2015/10/10-11:14:02··</div>
<div style="left:711.8px;top:118.42px;width:127.2px;height:9.97px;background:#ffffff;border-bottom:0.8px solid #d2bcbc;"></div>
<div style="left:774.2px;top:118.42px;width:0.8px;height:9.97px;background:#d2bcbc;"></div>
<div class="t" style="left:723.3px;top:120.84px;font-size:5.8px;line-height:7.54px;color:#2a2a2a;-webkit-text-stroke:0.15px #2a2a2a;">类型</div>
<div class="t" style="left:776.8000000000001px;top:120.69px;font-size:5.4px;line-height:7.02px;color:#555;">FS.iot.io.UDPC.Ch··</div>
<div style="left:711.8px;top:128.39000000000001px;width:127.2px;height:9.97px;background:#eeeeee;border-bottom:0.8px solid #d2bcbc;"></div>
<div style="left:774.2px;top:128.39000000000001px;width:0.8px;height:9.97px;background:#d2bcbc;"></div>
<div class="t" style="left:723.3px;top:130.81px;font-size:5.8px;line-height:7.54px;color:#2a2a2a;-webkit-text-stroke:0.15px #2a2a2a;">设备类型</div>
<div class="t" style="left:776.8000000000001px;top:130.67px;font-size:5.4px;line-height:7.02px;color:#555;">dfServer</div>
<div style="left:711.8px;top:138.36px;width:127.2px;height:9.97px;background:#ffffff;border-bottom:0.8px solid #d2bcbc;"></div>
<div style="left:774.2px;top:138.36px;width:0.8px;height:9.97px;background:#d2bcbc;"></div>
<div class="t" style="left:723.3px;top:140.78px;font-size:5.8px;line-height:7.54px;color:#111;font-weight:bold;font-family:'Liberation Sans','Noto Sans CJK SC',sans-serif;">驱动</div>
<div class="t" style="left:776.8000000000001px;top:140.64px;font-size:5.4px;line-height:7.02px;color:#222;">3001</div>
<div style="left:711.8px;top:148.33px;width:127.2px;height:9.97px;background:#9a9a9a;"></div>
<svg style="left:714.3px;top:152.33px" width="4" height="3" viewBox="0 0 4 3"><path d="M0.2 0.3 H3.6 L1.9 2.6 Z" fill="#ddd"/></svg>
<div class="t" style="left:722.8px;top:151.05px;font-size:5.8px;line-height:7.54px;color:#fff;font-weight:bold;font-family:'Liberation Sans','Noto Sans CJK SC',sans-serif;">连接方式</div>
<div style="left:711.8px;top:158.3px;width:127.2px;height:9.97px;background:#ffffff;border-bottom:0.8px solid #d2bcbc;"></div>
<div style="left:774.2px;top:158.3px;width:0.8px;height:9.97px;background:#d2bcbc;"></div>
<div class="t" style="left:723.3px;top:160.72px;font-size:5.8px;line-height:7.54px;color:#2a2a2a;-webkit-text-stroke:0.15px #2a2a2a;">连接方式</div>
<div class="t" style="left:776.8000000000001px;top:160.58px;font-size:5.4px;line-height:7.02px;color:#555;">UDP Client Mode</div>
<div style="left:711.8px;top:168.27px;width:127.2px;height:9.97px;background:#eeeeee;border-bottom:0.8px solid #d2bcbc;"></div>
<div style="left:774.2px;top:168.27px;width:0.8px;height:9.97px;background:#d2bcbc;"></div>
<div class="t" style="left:723.3px;top:170.69px;font-size:5.8px;line-height:7.54px;color:#2a2a2a;-webkit-text-stroke:0.15px #2a2a2a;">IP地址</div>
<div class="t" style="left:776.8000000000001px;top:170.55px;font-size:5.4px;line-height:7.02px;color:#555;">192.168.100.1</div>
<div style="left:711.8px;top:178.24px;width:127.2px;height:9.97px;background:#ffffff;border-bottom:0.8px solid #d2bcbc;"></div>
<div style="left:774.2px;top:178.24px;width:0.8px;height:9.97px;background:#d2bcbc;"></div>
<div class="t" style="left:723.3px;top:180.66px;font-size:5.8px;line-height:7.54px;color:#2a2a2a;-webkit-text-stroke:0.15px #2a2a2a;">端口号</div>
<div class="t" style="left:776.8000000000001px;top:180.52px;font-size:5.4px;line-height:7.02px;color:#555;">3001</div>
<div style="left:711.8px;top:188.21px;width:127.2px;height:9.97px;background:#eeeeee;border-bottom:0.8px solid #d2bcbc;"></div>
<div style="left:774.2px;top:188.21px;width:0.8px;height:9.97px;background:#d2bcbc;"></div>
<div class="t" style="left:723.3px;top:190.62px;font-size:5.8px;line-height:7.54px;color:#2a2a2a;-webkit-text-stroke:0.15px #2a2a2a;">协议</div>
<div class="t" style="left:776.8000000000001px;top:190.49px;font-size:5.4px;line-height:7.02px;color:#555;">df Server over UDP</div>
<div style="left:711.8px;top:198.18px;width:127.2px;height:9.97px;background:#9a9a9a;"></div>
<svg style="left:714.3px;top:202.18px" width="4" height="3" viewBox="0 0 4 3"><path d="M0.2 0.3 H3.6 L1.9 2.6 Z" fill="#ddd"/></svg>
<div class="t" style="left:722.8px;top:200.9px;font-size:5.8px;line-height:7.54px;color:#fff;font-weight:bold;font-family:'Liberation Sans','Noto Sans CJK SC',sans-serif;">断线重连</div>
<div style="left:711.8px;top:208.15px;width:127.2px;height:9.97px;background:#eeeeee;border-bottom:0.8px solid #d2bcbc;"></div>
<div style="left:774.2px;top:208.15px;width:0.8px;height:9.97px;background:#d2bcbc;"></div>
<div class="t" style="left:723.3px;top:210.56px;font-size:5.8px;line-height:7.54px;color:#111;font-weight:bold;font-family:'Liberation Sans','Noto Sans CJK SC',sans-serif;">重连模式</div>
<div class="t" style="left:776.8000000000001px;top:210.43px;font-size:5.4px;line-height:7.02px;color:#222;">automatic</div>
<div style="left:711.8px;top:218.12px;width:127.2px;height:9.97px;background:#ffffff;border-bottom:0.8px solid #d2bcbc;"></div>
<div style="left:774.2px;top:218.12px;width:0.8px;height:9.97px;background:#d2bcbc;"></div>
<div class="t" style="left:723.3px;top:220.53px;font-size:5.8px;line-height:7.54px;color:#2a2a2a;-webkit-text-stroke:0.15px #2a2a2a;">状态</div>
<div class="t" style="left:776.8000000000001px;top:220.4px;font-size:5.4px;line-height:7.02px;color:#555;">connected</div>
<div style="left:711.8px;top:228.09px;width:127.2px;height:9.97px;background:#9a9a9a;"></div>
<svg style="left:714.3px;top:232.09px" width="4" height="3" viewBox="0 0 4 3"><path d="M0.2 0.3 H3.6 L1.9 2.6 Z" fill="#ddd"/></svg>
<div class="t" style="left:722.8px;top:230.81px;font-size:5.8px;line-height:7.54px;color:#fff;font-weight:bold;font-family:'Liberation Sans','Noto Sans CJK SC',sans-serif;">高级</div>
<div style="left:711.8px;top:238.06px;width:127.2px;height:9.97px;background:#ffffff;border-bottom:0.8px solid #d2bcbc;"></div>
<div style="left:774.2px;top:238.06px;width:0.8px;height:9.97px;background:#d2bcbc;"></div>
<div class="t" style="left:723.3px;top:240.47px;font-size:5.8px;line-height:7.54px;color:#111;font-weight:bold;font-family:'Liberation Sans','Noto Sans CJK SC',sans-serif;">采样率</div>
<div class="t" style="left:776.8000000000001px;top:240.34px;font-size:5.4px;line-height:7.02px;color:#222;">2(read)+2(write)··</div>
<div style="left:711.8px;top:248.03px;width:127.2px;height:9.97px;background:#eeeeee;border-bottom:0.8px solid #d2bcbc;"></div>
<div style="left:774.2px;top:248.03px;width:0.8px;height:9.97px;background:#d2bcbc;"></div>
<div class="t" style="left:723.3px;top:250.44px;font-size:5.8px;line-height:7.54px;color:#111;font-weight:bold;font-family:'Liberation Sans','Noto Sans CJK SC',sans-serif;">最大重试数</div>
<div class="t" style="left:776.8000000000001px;top:250.31px;font-size:5.4px;line-height:7.02px;color:#222;">3</div>
<div style="left:711.8px;top:258.0px;width:127.2px;height:9.97px;background:#ffffff;border-bottom:0.8px solid #d2bcbc;"></div>
<div style="left:774.2px;top:258.0px;width:0.8px;height:9.97px;background:#d2bcbc;"></div>
<div class="t" style="left:723.3px;top:260.42px;font-size:5.8px;line-height:7.54px;color:#111;font-weight:bold;font-family:'Liberation Sans','Noto Sans CJK SC',sans-serif;">最大允许延迟</div>
<div class="t" style="left:776.8000000000001px;top:260.28px;font-size:5.4px;line-height:7.02px;color:#222;">3</div>
<div style="left:711.8px;top:267.97px;width:127.2px;height:9.97px;background:#eeeeee;border-bottom:0.8px solid #d2bcbc;"></div>
<div style="left:774.2px;top:267.97px;width:0.8px;height:9.97px;background:#d2bcbc;"></div>
<div class="t" style="left:723.3px;top:270.39px;font-size:5.8px;line-height:7.54px;color:#111;font-weight:bold;font-family:'Liberation Sans','Noto Sans CJK SC',sans-serif;">最大采样延迟</div>
<div class="t" style="left:776.8000000000001px;top:270.25px;font-size:5.4px;line-height:7.02px;color:#222;">3</div>
<div style="left:711.8px;top:277.94000000000005px;width:127.2px;height:9.97px;background:#ffffff;border-bottom:0.8px solid #d2bcbc;"></div>
<div style="left:774.2px;top:277.94000000000005px;width:0.8px;height:9.97px;background:#d2bcbc;"></div>
<div class="t" style="left:723.3px;top:280.36px;font-size:5.8px;line-height:7.54px;color:#111;font-weight:bold;font-family:'Liberation Sans','Noto Sans CJK SC',sans-serif;">默认采样周期</div>
<div class="t" style="left:776.8000000000001px;top:280.22px;font-size:5.4px;line-height:7.02px;color:#222;">1</div>
<svg style="left:695px;top:473.5px" width="13" height="7" viewBox="0 0 13 7"><rect x="0.6" y="1" width="4.6" height="4.8" fill="#777"/><rect x="1.6" y="2.4" width="2.4" height="2.4" fill="#ddd"/><rect x="6.6" y="1" width="4.6" height="4.8" fill="#777"/><path d="M7.6 2 L10.2 4.8 M10.2 2 L7.6 4.8" stroke="#eee" stroke-width="0.8"/></svg>
<div style="left:131px;top:483px;width:577.2px;height:116.4px;background:#fff;border-left:1.5px solid #b9b9b0;border-bottom:0.9px solid #a6a598;"></div>
<div style="left:701px;top:483px;width:7px;height:116px;background:#ecebe0;"></div>
<div style="left:701px;top:491.5px;width:7px;height:83px;background:#c9c9c9;"></div>
<svg style="left:701px;top:484.6px" width="7" height="6" viewBox="0 0 7 6"><path d="M1.4 4.4 L3.5 1.4 L5.6 4.4 Z" fill="#444"/></svg>
<div class="m" style="left:133.8px;top:481.94px;font-size:5.79px;line-height:7.53px;color:#128a16;-webkit-text-stroke:0.18px #128a16;">2015-10-11 11:45:05.515&gt; Server receive position request from F0L.</div>
<div class="m" style="left:133.8px;top:491.24px;font-size:5.79px;line-height:7.53px;color:#14148c;-webkit-text-stroke:0.18px #14148c;">2015-10-11 11:45:35.031&gt; Server received a total of 3039 xpts from JLS.</div>
<div class="m" style="left:133.8px;top:500.54px;font-size:5.79px;line-height:7.53px;color:#14148c;-webkit-text-stroke:0.18px #14148c;">2015-10-11 11:45:35.057&gt; Server received a total of 3091 xpts from JLS.</div>
<div class="m" style="left:133.8px;top:509.84px;font-size:5.79px;line-height:7.53px;color:#128a16;-webkit-text-stroke:0.18px #128a16;">2015-10-11 11:45:35.870&gt; Server received a heartbeat. server ip:192.168.100.1 client: B20[192.168.100.40:52962]</div>
<div class="m" style="left:133.8px;top:519.13px;font-size:5.79px;line-height:7.53px;color:#128a16;-webkit-text-stroke:0.18px #128a16;">2015-10-11 11:45:35.875&gt; Server receive position request from F0e.</div>
<div class="m" style="left:133.8px;top:528.44px;font-size:5.79px;line-height:7.53px;color:#128a16;-webkit-text-stroke:0.18px #128a16;">2015-10-11 11:45:35.914&gt; Server received a heartbeat. server ip:192.168.100.1 client: B05[192.168.100.50:53426]</div>
<div class="m" style="left:133.8px;top:537.74px;font-size:5.79px;line-height:7.53px;color:#128a16;-webkit-text-stroke:0.18px #128a16;">2015-10-11 11:45:36.230&gt; Server received position request from F0C.</div>
<div class="m" style="left:133.8px;top:547.03px;font-size:5.79px;line-height:7.53px;color:#128a16;-webkit-text-stroke:0.18px #128a16;">2015-10-11 11:45:36.251&gt; Server received a heartbeat. server ip:192.168.100.1 client: B20[192.168.100.36:50905]</div>
<div class="m" style="left:133.8px;top:556.34px;font-size:5.79px;line-height:7.53px;color:#128a16;-webkit-text-stroke:0.18px #128a16;">2015-10-11 11:45:36.539&gt; Server received a heartbeat. server ip:192.168.100.1 client: A05[192.168.100.54:53519]</div>
<div class="m" style="left:133.8px;top:565.63px;font-size:5.79px;line-height:7.53px;color:#128a16;-webkit-text-stroke:0.18px #128a16;">2015-10-11 11:45:36.675&gt; Server receive position request from F0e.</div>
<div class="m" style="left:133.8px;top:574.94px;font-size:5.79px;line-height:7.53px;color:#128a16;-webkit-text-stroke:0.18px #128a16;">2015-10-11 11:45:37.235&gt; Server received a heartbeat. server ip:192.168.100.1 client: B02[192.168.100.32:52904]</div>
<div class="m" style="left:133.8px;top:584.24px;font-size:5.79px;line-height:7.53px;color:#128a16;-webkit-text-stroke:0.18px #128a16;">2015-10-11 11:45:38.554&gt; Server received a heartbeat. server ip:192.168.100.1 client: A10[192.168.100.30:58978]</div>
<div style="left:132.6px;top:478px;width:568px;height:5px;background:#dddcc9;"></div>
<div class="t" style="left:132.6px;top:473.83px;font-size:5.8px;line-height:7.54px;color:#111;font-weight:bold;font-family:'Liberation Sans','Noto Sans CJK SC',sans-serif;">消息视图</div>
<div style="left:0px;top:600px;width:840px;height:10px;background:#dddcc9;"></div>
<div style="left:838.8px;top:46px;width:1.2px;height:564px;background:#dddcc9;"></div>
<div style="left:827px;top:556px;width:12.4px;height:30px;background:#565656;border-radius:2px 0 0 0;"></div>
<div style="left:829px;top:560px;width:10.4px;height:12.4px;background:#0f3f7a;"></div>
<svg style="left:829.4px;top:561px" width="10" height="11" viewBox="0 0 10 11"><circle cx="5.4" cy="5.2" r="4.2" fill="#3f78c4"/><path d="M2.6 5 L4.4 3.8 V6.2 Z M8.2 5 L6.4 3.8 V6.2 Z" fill="#0f3f7a"/><rect x="4" y="4.6" width="2.8" height="0.9" fill="#0f3f7a"/></svg>
<div style="left:828.4px;top:586px;width:11.6px;height:24px;background:#dddcc9;"></div>
<div style="left:828.4px;top:599.2px;width:11.6px;height:0.8px;background:#f2f2ea;"></div>
<div style="left:830px;top:603.4px;width:3.6px;height:6.6px;background:#7fc8cc;"></div>
<div style="left:834.6px;top:603.4px;width:3.6px;height:6.6px;background:#7fc8cc;"></div>
<div style="left:761px;top:570px;width:50.4px;height:11px;background:#fff;border:0.9px solid #b0b0b0;border-top:1.2px solid #6a6a6a;"></div>
<div class="t" style="left:764px;top:572.16px;font-size:5.6px;line-height:7.28px;color:#8a8a9a;">会话 1</div>
<div style="left:691px;top:579px;width:137.4px;height:31.4px;background:#fff;border-left:1px solid #b8b8b8;border-top:1px solid #d0d0d0;"></div>
<svg style="left:694px;top:582px" width="22" height="26.8" viewBox="0 0 22 26.8">
<defs><filter id="pb" x="-10%" y="-10%" width="120%" height="120%"><feGaussianBlur stdDeviation="0.55"/></filter>
<clipPath id="pc"><rect width="22" height="26.8"/></clipPath></defs>
<g clip-path="url(#pc)"><g filter="url(#pb)">
<rect x="-2" y="-2" width="26" height="31" fill="#ab9c95"/>
<rect x="-2" y="-2" width="11" height="14" fill="#c4b9b1"/>
<rect x="0" y="12" width="7" height="10" fill="#9c8f88"/>
<ellipse cx="2.6" cy="11.2" rx="1.8" ry="1.6" fill="#f4f0ec"/>
<rect x="6.6" y="8" width="1.7" height="15" fill="#2a2625"/>
<rect x="18.8" y="-1" width="4" height="17" fill="#d2c9c2"/>
<path d="M4 28 Q5 17.5 11 16.2 Q16 15 19 17 Q22.5 19 23 28 Z" fill="#4b4a4b"/>
<path d="M13 15 L15.6 19.6 L17.6 15 Z" fill="#b9907e"/>
<ellipse cx="15" cy="9.4" rx="3.9" ry="5.4" fill="#c39a88"/>
<path d="M10.6 8 Q10.4 1.2 15.6 1.4 Q20 1.8 19.4 8 Q17.6 4.6 14.4 5.4 Q11.8 6 11.2 9.4 Z" fill="#2b2624"/>
<rect x="12.2" y="7.6" width="5.6" height="0.9" fill="#4a3a36"/>
<rect x="0" y="24.6" width="22" height="3" fill="#3a3838"/>
</g>
<rect x="2.6" y="22.2" width="9.4" height="2" fill="#58cc14"/>
</g></svg>
<div class="t" style="left:724px;top:587.5px;font-size:6.0px;line-height:7.8px;color:#16284e;font-weight:bold;font-family:'Liberation Sans','Noto Sans CJK SC',sans-serif;">Receive Clipboard - 100%</div>
<div class="t" style="left:724px;top:597.43px;font-size:5.8px;line-height:7.54px;color:#5a6290;">Flash_server4</div>
<svg style="left:819.5px;top:593.4px" width="6" height="6" viewBox="0 0 6 6"><path d="M0.8 0.8 L5 5 M5 0.8 L0.8 5" stroke="#777" stroke-width="0.8"/></svg>
</body></html>
